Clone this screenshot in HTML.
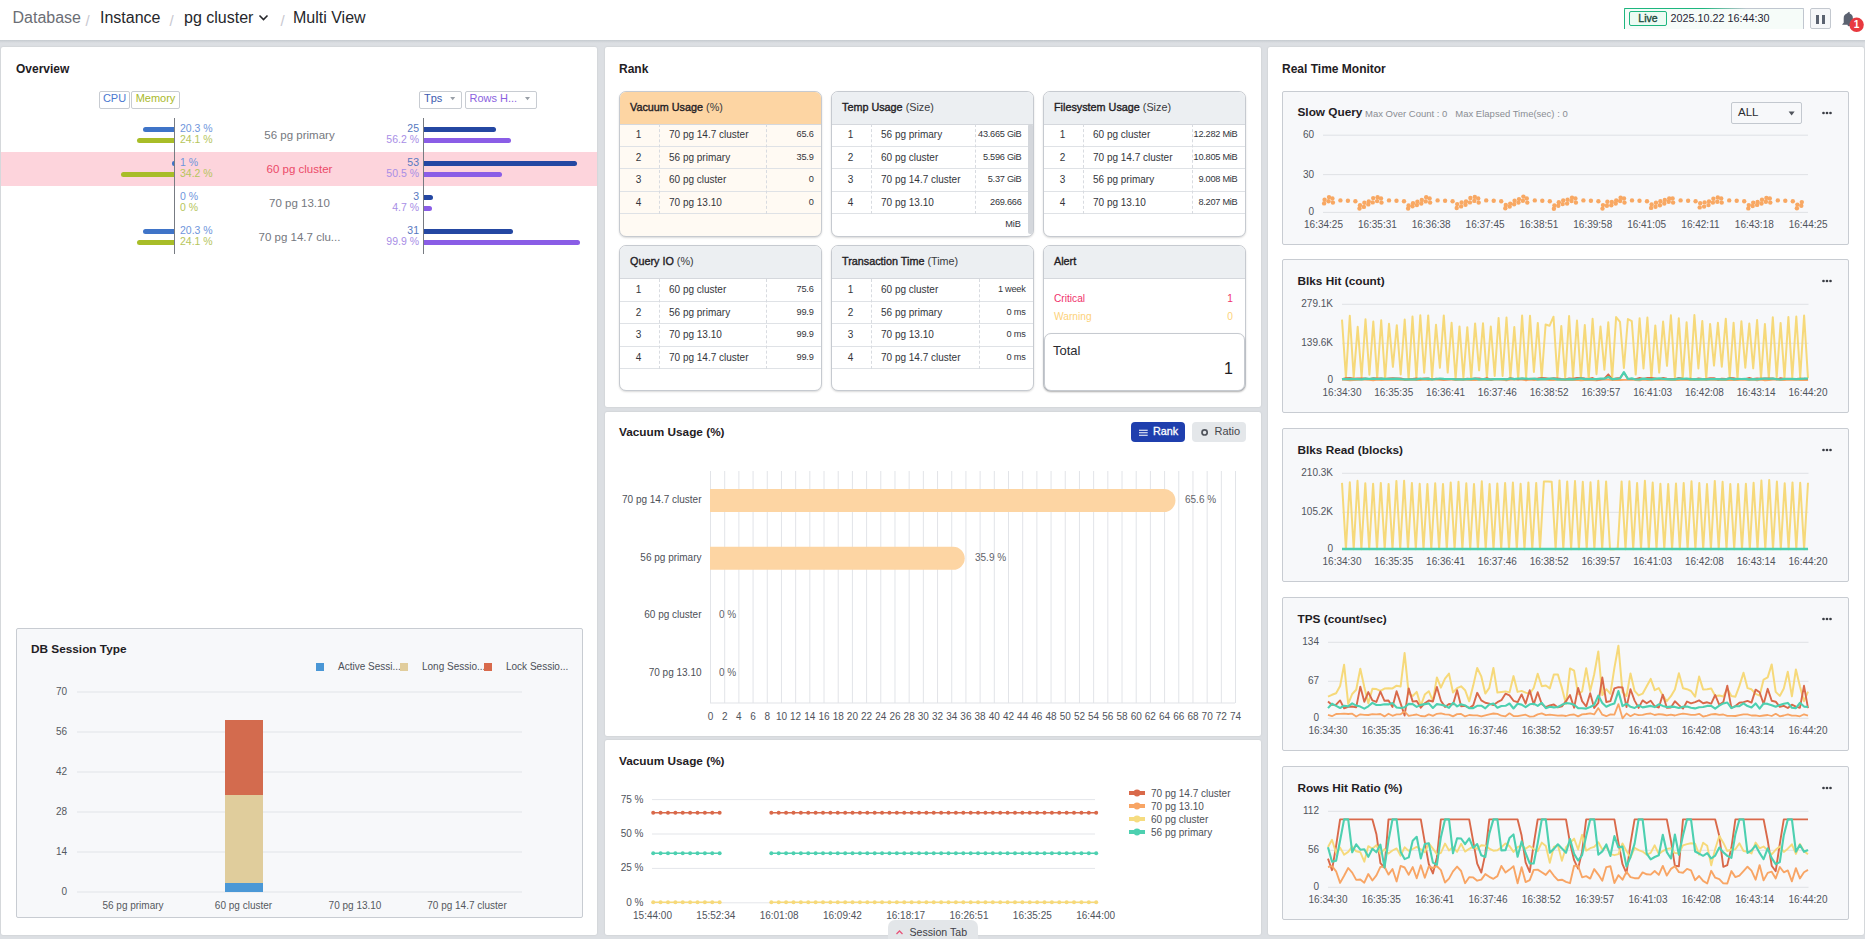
<!DOCTYPE html><html><head><meta charset="utf-8"><style>
*{margin:0;padding:0;box-sizing:border-box}
html,body{width:1865px;height:939px;overflow:hidden;background:#dcdfe3;font-family:"Liberation Sans",sans-serif}
.t{position:absolute;white-space:nowrap}
.b{position:absolute}
svg{position:absolute;left:0;top:0}
</style></head><body><div class="b" style="left:0px;top:0px;width:1865px;height:40px;background:#fff;"></div>
<div class="b" style="left:0px;top:40px;width:1865px;height:3px;background:linear-gradient(#c6cbd0,#dcdfe3);"></div>
<div class="t" style="left:12.5px;top:7.50px;font-size:16px;line-height:20px;color:#6b6e75;font-weight:normal;">Database</div>
<div class="t" style="left:85.5px;top:10.50px;font-size:15px;line-height:19px;color:#c8c8d0;font-weight:normal;">/</div>
<div class="t" style="left:100px;top:7.50px;font-size:16px;line-height:20px;color:#26272b;font-weight:normal;">Instance</div>
<div class="t" style="left:169.5px;top:10.50px;font-size:15px;line-height:19px;color:#c8c8d0;font-weight:normal;">/</div>
<div class="t" style="left:184px;top:7.50px;font-size:16px;line-height:20px;color:#26272b;font-weight:normal;">pg cluster</div>
<svg width="1865" height="40" style="left:0;top:0"><path d="M259.5 15.5 L263.5 19.5 L267.5 15.5" fill="none" stroke="#26272b" stroke-width="1.6"/></svg>
<div class="t" style="left:280.5px;top:10.50px;font-size:15px;line-height:19px;color:#c8c8d0;font-weight:normal;">/</div>
<div class="t" style="left:293px;top:7.50px;font-size:16px;line-height:20px;color:#26272b;font-weight:normal;">Multi View</div>
<div class="b" style="left:1624px;top:8px;width:180px;height:21px;background:#f6fcf9;border-left:1px solid #1db67f;border-right:1px solid #c0c6cf;border-radius:2px 2px 0 0;"></div>
<div class="b" style="left:1624px;top:8px;width:180px;height:1px;background:linear-gradient(90deg,#1db67f 0%,#1db67f 44%,#bfc6cf 68%,#bfc6cf 100%);border-radius:2px 2px 0 0;"></div>
<div class="b" style="left:1629px;top:11px;width:38px;height:15px;background:#ecfbf3;border:1px solid #1db67f;border-radius:2px;"></div>
<div class="t" style="left:1628.0px;width:40px;text-align:center;top:11.25px;font-size:10.5px;line-height:14.5px;color:#1b4a3d;font-weight:normal;-webkit-text-stroke:0.35px #1b4a3d;">Live</div>
<div class="t" style="left:1670.5px;top:10.60px;font-size:10.8px;line-height:14.8px;color:#262636;font-weight:normal;">2025.10.22 16:44:30</div>
<div class="b" style="left:1810px;top:8px;width:21px;height:21px;background:#f6f7f9;border:1px solid #c3c8cf;border-radius:2px;"></div>
<div class="b" style="left:1816px;top:15px;width:3px;height:9px;background:#5b6270;"></div>
<div class="b" style="left:1822px;top:15px;width:3px;height:9px;background:#5b6270;"></div>
<svg width="1865" height="40" style="left:0;top:0"><path d="M1848.3 12.2 a1 1 0 0 1 1.4 0 l0 1.2 c2.2 .6 3.2 2.4 3.2 4.8 v4.6 l1.4 1.4 v.6 h-12 v-.6 l1.4 -1.4 v-4.6 c0 -2.4 1 -4.2 3.2 -4.8z M1847.5 24.8 h3 a1.5 1.5 0 0 1 -3 0z" fill="#5b6270"/><circle cx="1856.6" cy="24.8" r="7.2" fill="#e8393f"/></svg>
<div class="t" style="left:1849.6px;width:14px;text-align:center;top:17.80px;font-size:10px;line-height:14px;color:#fff;font-weight:bold;">1</div>
<div class="b" style="left:1px;top:47px;width:596px;height:888px;background:#fff;border-radius:2px;box-shadow:0 0 2px rgba(0,0,0,.12);"></div>
<div class="b" style="left:605px;top:47px;width:656px;height:360px;background:#fff;border-radius:2px;box-shadow:0 0 2px rgba(0,0,0,.12);"></div>
<div class="b" style="left:605px;top:412px;width:656px;height:324px;background:#fff;border-radius:2px;box-shadow:0 0 2px rgba(0,0,0,.12);"></div>
<div class="b" style="left:605px;top:740px;width:656px;height:195px;background:#fff;border-radius:2px;box-shadow:0 0 2px rgba(0,0,0,.12);"></div>
<div class="b" style="left:1268px;top:47px;width:596px;height:888px;background:#fff;border-radius:2px;box-shadow:0 0 2px rgba(0,0,0,.12);"></div>
<div class="t" style="left:16px;top:60.50px;font-size:12px;line-height:16px;color:#1f2024;font-weight:bold;">Overview</div>
<div class="b" style="left:99px;top:91px;width:31px;height:18px;background:#fff;border:1px solid #c8ccd2;border-radius:2px;"></div>
<div class="t" style="left:99.5px;width:30px;text-align:center;top:91.00px;font-size:11px;line-height:15px;color:#4a78d0;font-weight:normal;">CPU</div>
<div class="b" style="left:131px;top:91px;width:49px;height:18px;background:#fff;border:1px solid #c8ccd2;border-radius:2px;"></div>
<div class="t" style="left:131.5px;width:48px;text-align:center;top:91.00px;font-size:11px;line-height:15px;color:#a9b92c;font-weight:normal;">Memory</div>
<div class="b" style="left:419px;top:91px;width:43px;height:18px;background:#fff;border:1px solid #c8ccd2;border-radius:2px;"></div>
<div class="t" style="left:424px;top:91.00px;font-size:11px;line-height:15px;color:#3d5bb0;font-weight:normal;">Tps</div>
<div class="b" style="left:465px;top:91px;width:72px;height:18px;background:#fff;border:1px solid #c8ccd2;border-radius:2px;"></div>
<svg width="1865" height="939"><path d="M450.2 97 h5 l-2.5 3.2z M525 97 h5 l-2.5 3.2z" fill="#9aa0a8"/></svg>
<div class="t" style="left:469.5px;top:91.00px;font-size:11px;line-height:15px;color:#8a62e0;font-weight:normal;">Rows H...</div>
<div class="b" style="left:142.535px;top:127px;width:31.465000000000003px;height:5px;background:#3f74c8;border-radius:3px 0 0 3px;"></div>
<div class="b" style="left:136.64499999999998px;top:137.5px;width:37.355000000000004px;height:5.5px;background:#a8bd28;border-radius:3px 0 0 3px;"></div>
<div class="t" style="left:180px;top:121.25px;font-size:10.5px;line-height:14.5px;color:#6f96dc;font-weight:normal;">20.3 %</div>
<div class="t" style="left:180px;top:131.95px;font-size:10.5px;line-height:14.5px;color:#b6c55c;font-weight:normal;">24.1 %</div>
<div class="t" style="left:229.5px;width:140px;text-align:center;top:127.95px;font-size:11.5px;line-height:15.5px;color:#75787e;font-weight:normal;">56 pg primary</div>
<div class="b" style="left:423px;top:127px;width:72.5px;height:5px;background:#2447a2;border-radius:0 3px 3px 0;"></div>
<div class="b" style="left:423px;top:137.5px;width:88.23400000000001px;height:5.5px;background:#8a5de6;border-radius:0 3px 3px 0;"></div>
<div class="t" style="left:359px;width:60px;text-align:right;top:121.25px;font-size:10.5px;line-height:14.5px;color:#5778c0;font-weight:normal;">25</div>
<div class="t" style="left:359px;width:60px;text-align:right;top:131.95px;font-size:10.5px;line-height:14.5px;color:#a88ee6;font-weight:normal;">56.2 %</div>
<div class="b" style="left:1px;top:152px;width:596px;height:34px;background:#fdd4dc;"></div>
<div class="b" style="left:172.45px;top:161px;width:1.55px;height:5px;background:#3f74c8;border-radius:3px 0 0 3px;"></div>
<div class="b" style="left:120.99px;top:171.5px;width:53.010000000000005px;height:5.5px;background:#a8bd28;border-radius:3px 0 0 3px;"></div>
<div class="t" style="left:180px;top:155.25px;font-size:10.5px;line-height:14.5px;color:#6f96dc;font-weight:normal;">1 %</div>
<div class="t" style="left:180px;top:165.95px;font-size:10.5px;line-height:14.5px;color:#b6c55c;font-weight:normal;">34.2 %</div>
<div class="t" style="left:229.5px;width:140px;text-align:center;top:161.95px;font-size:11.5px;line-height:15.5px;color:#ec4a69;font-weight:normal;">60 pg cluster</div>
<div class="b" style="left:423px;top:161px;width:153.7px;height:5px;background:#2447a2;border-radius:0 3px 3px 0;"></div>
<div class="b" style="left:423px;top:171.5px;width:79.285px;height:5.5px;background:#8a5de6;border-radius:0 3px 3px 0;"></div>
<div class="t" style="left:359px;width:60px;text-align:right;top:155.25px;font-size:10.5px;line-height:14.5px;color:#5778c0;font-weight:normal;">53</div>
<div class="t" style="left:359px;width:60px;text-align:right;top:165.95px;font-size:10.5px;line-height:14.5px;color:#a88ee6;font-weight:normal;">50.5 %</div>
<div class="t" style="left:180px;top:189.25px;font-size:10.5px;line-height:14.5px;color:#6f96dc;font-weight:normal;">0 %</div>
<div class="t" style="left:180px;top:199.95px;font-size:10.5px;line-height:14.5px;color:#b6c55c;font-weight:normal;">0 %</div>
<div class="t" style="left:229.5px;width:140px;text-align:center;top:195.95px;font-size:11.5px;line-height:15.5px;color:#75787e;font-weight:normal;">70 pg 13.10</div>
<div class="b" style="left:423px;top:195px;width:10px;height:5px;background:#2447a2;border-radius:0 3px 3px 0;"></div>
<div class="b" style="left:423px;top:205.5px;width:9px;height:5.5px;background:#8a5de6;border-radius:0 3px 3px 0;"></div>
<div class="t" style="left:359px;width:60px;text-align:right;top:189.25px;font-size:10.5px;line-height:14.5px;color:#5778c0;font-weight:normal;">3</div>
<div class="t" style="left:359px;width:60px;text-align:right;top:199.95px;font-size:10.5px;line-height:14.5px;color:#a88ee6;font-weight:normal;">4.7 %</div>
<div class="b" style="left:142.535px;top:229px;width:31.465000000000003px;height:5px;background:#3f74c8;border-radius:3px 0 0 3px;"></div>
<div class="b" style="left:136.64499999999998px;top:239.5px;width:37.355000000000004px;height:5.5px;background:#a8bd28;border-radius:3px 0 0 3px;"></div>
<div class="t" style="left:180px;top:223.25px;font-size:10.5px;line-height:14.5px;color:#6f96dc;font-weight:normal;">20.3 %</div>
<div class="t" style="left:180px;top:233.95px;font-size:10.5px;line-height:14.5px;color:#b6c55c;font-weight:normal;">24.1 %</div>
<div class="t" style="left:229.5px;width:140px;text-align:center;top:229.95px;font-size:11.5px;line-height:15.5px;color:#75787e;font-weight:normal;">70 pg 14.7 clu...</div>
<div class="b" style="left:423px;top:229px;width:89.89999999999999px;height:5px;background:#2447a2;border-radius:0 3px 3px 0;"></div>
<div class="b" style="left:423px;top:239.5px;width:156.84300000000002px;height:5.5px;background:#8a5de6;border-radius:0 3px 3px 0;"></div>
<div class="t" style="left:359px;width:60px;text-align:right;top:223.25px;font-size:10.5px;line-height:14.5px;color:#5778c0;font-weight:normal;">31</div>
<div class="t" style="left:359px;width:60px;text-align:right;top:233.95px;font-size:10.5px;line-height:14.5px;color:#a88ee6;font-weight:normal;">99.9 %</div>
<div class="b" style="left:174px;top:118px;width:1px;height:136px;background:#777b82;"></div>
<div class="b" style="left:423px;top:118px;width:1px;height:136px;background:#777b82;"></div>
<div class="b" style="left:16px;top:628px;width:567px;height:290px;background:#f7f8fa;border:1px solid #c8ccd2;border-radius:2px;"></div>
<div class="t" style="left:31px;top:641.60px;font-size:11.8px;line-height:15.8px;color:#1f2024;font-weight:bold;">DB Session Type</div>
<div class="b" style="left:316px;top:663px;width:8px;height:8px;background:#4a97d6;"></div>
<div class="t" style="left:338px;top:660.00px;font-size:10px;line-height:14px;color:#4d5058;font-weight:normal;">Active Sessi...</div>
<div class="b" style="left:400px;top:663px;width:8px;height:8px;background:#e1cd9c;"></div>
<div class="t" style="left:422px;top:660.00px;font-size:10px;line-height:14px;color:#4d5058;font-weight:normal;">Long Sessio...</div>
<div class="b" style="left:484px;top:663px;width:8px;height:8px;background:#d86a4c;"></div>
<div class="t" style="left:506px;top:660.00px;font-size:10px;line-height:14px;color:#4d5058;font-weight:normal;">Lock Sessio...</div>
<svg width="1865" height="939"><rect x="77" y="691.5" width="445" height="1" fill="#e1e3e7"/><rect x="77" y="731.5" width="445" height="1" fill="#e1e3e7"/><rect x="77" y="771.5" width="445" height="1" fill="#e1e3e7"/><rect x="77" y="811.5" width="445" height="1" fill="#e1e3e7"/><rect x="77" y="851.5" width="445" height="1" fill="#e1e3e7"/><rect x="77" y="891.5" width="445" height="1" fill="#e1e3e7"/><rect x="225" y="720" width="38" height="75" fill="#d36b4e"/><rect x="225" y="795" width="38" height="88" fill="#e0cd9c"/><rect x="225" y="883" width="38" height="9" fill="#4b98d6"/></svg>
<div class="t" style="left:27px;width:40px;text-align:right;top:685.00px;font-size:10px;line-height:14px;color:#55585e;font-weight:normal;">70</div>
<div class="t" style="left:27px;width:40px;text-align:right;top:725.00px;font-size:10px;line-height:14px;color:#55585e;font-weight:normal;">56</div>
<div class="t" style="left:27px;width:40px;text-align:right;top:765.00px;font-size:10px;line-height:14px;color:#55585e;font-weight:normal;">42</div>
<div class="t" style="left:27px;width:40px;text-align:right;top:805.00px;font-size:10px;line-height:14px;color:#55585e;font-weight:normal;">28</div>
<div class="t" style="left:27px;width:40px;text-align:right;top:845.00px;font-size:10px;line-height:14px;color:#55585e;font-weight:normal;">14</div>
<div class="t" style="left:27px;width:40px;text-align:right;top:885.00px;font-size:10px;line-height:14px;color:#55585e;font-weight:normal;">0</div>
<div class="t" style="left:73.0px;width:120px;text-align:center;top:898.50px;font-size:10px;line-height:14px;color:#55585e;font-weight:normal;">56 pg primary</div>
<div class="t" style="left:183.5px;width:120px;text-align:center;top:898.50px;font-size:10px;line-height:14px;color:#55585e;font-weight:normal;">60 pg cluster</div>
<div class="t" style="left:295.0px;width:120px;text-align:center;top:898.50px;font-size:10px;line-height:14px;color:#55585e;font-weight:normal;">70 pg 13.10</div>
<div class="t" style="left:407.0px;width:120px;text-align:center;top:898.50px;font-size:10px;line-height:14px;color:#55585e;font-weight:normal;">70 pg 14.7 cluster</div>
<div class="t" style="left:619px;top:60.50px;font-size:12px;line-height:16px;color:#1f2024;font-weight:bold;">Rank</div>
<div class="b" style="left:619px;top:91px;width:203px;height:146px;background:#fffaf3;border:1px solid #c6cad0;border-radius:7px;box-shadow:0 1px 2px rgba(0,0,0,.15);overflow:hidden;"></div>
<div class="b" style="left:620px;top:92px;width:201px;height:33px;background:#fdd5a3;border-radius:6px 6px 0 0;border-bottom:1px solid #d5d8dd;"></div>
<div class="t" style="left:630px;top:100.40px;font-size:10.8px;line-height:14.8px;color:#1f2024;font-weight:normal;"><span style="-webkit-text-stroke:0.35px #1f2024">Vacuum Usage</span> <span style="color:#3a3b40">(%)</span></div>
<div class="b" style="left:620px;top:145.5px;width:201px;height:1px;background:#dfe2e6;"></div>
<div class="t" style="left:623.5px;width:30px;text-align:center;top:128.00px;font-size:10px;line-height:14px;color:#33353b;font-weight:normal;">1</div>
<div class="t" style="left:669px;top:128.00px;font-size:10px;line-height:14px;color:#33353b;font-weight:normal;">70 pg 14.7 cluster</div>
<div class="t" style="left:733.5px;width:80px;text-align:right;top:128.40px;font-size:9.2px;line-height:13.2px;color:#33353b;font-weight:normal;letter-spacing:-0.25px;">65.6</div>
<div class="b" style="left:620px;top:168.0px;width:201px;height:1px;background:#dfe2e6;"></div>
<div class="t" style="left:623.5px;width:30px;text-align:center;top:150.50px;font-size:10px;line-height:14px;color:#33353b;font-weight:normal;">2</div>
<div class="t" style="left:669px;top:150.50px;font-size:10px;line-height:14px;color:#33353b;font-weight:normal;">56 pg primary</div>
<div class="t" style="left:733.5px;width:80px;text-align:right;top:150.90px;font-size:9.2px;line-height:13.2px;color:#33353b;font-weight:normal;letter-spacing:-0.25px;">35.9</div>
<div class="b" style="left:620px;top:190.5px;width:201px;height:1px;background:#dfe2e6;"></div>
<div class="t" style="left:623.5px;width:30px;text-align:center;top:173.00px;font-size:10px;line-height:14px;color:#33353b;font-weight:normal;">3</div>
<div class="t" style="left:669px;top:173.00px;font-size:10px;line-height:14px;color:#33353b;font-weight:normal;">60 pg cluster</div>
<div class="t" style="left:733.5px;width:80px;text-align:right;top:173.40px;font-size:9.2px;line-height:13.2px;color:#33353b;font-weight:normal;letter-spacing:-0.25px;">0</div>
<div class="b" style="left:620px;top:213.0px;width:201px;height:1px;background:#dfe2e6;"></div>
<div class="t" style="left:623.5px;width:30px;text-align:center;top:195.50px;font-size:10px;line-height:14px;color:#33353b;font-weight:normal;">4</div>
<div class="t" style="left:669px;top:195.50px;font-size:10px;line-height:14px;color:#33353b;font-weight:normal;">70 pg 13.10</div>
<div class="t" style="left:733.5px;width:80px;text-align:right;top:195.90px;font-size:9.2px;line-height:13.2px;color:#33353b;font-weight:normal;letter-spacing:-0.25px;">0</div>
<div class="b" style="left:658.5px;top:123.5px;width:0px;height:90px;border-left:1px dashed #d8dbe0;"></div>
<div class="b" style="left:766px;top:123.5px;width:0px;height:90px;border-left:1px dashed #d8dbe0;"></div>
<div class="b" style="left:831px;top:91px;width:203px;height:146px;background:#fff;border:1px solid #c6cad0;border-radius:7px;box-shadow:0 1px 2px rgba(0,0,0,.15);overflow:hidden;"></div>
<div class="b" style="left:832px;top:92px;width:201px;height:33px;background:#eceff2;border-radius:6px 6px 0 0;border-bottom:1px solid #d5d8dd;"></div>
<div class="t" style="left:842px;top:100.40px;font-size:10.8px;line-height:14.8px;color:#1f2024;font-weight:normal;"><span style="-webkit-text-stroke:0.35px #1f2024">Temp Usage</span> <span style="color:#3a3b40">(Size)</span></div>
<div class="b" style="left:832px;top:145.5px;width:196px;height:1px;background:#dfe2e6;"></div>
<div class="t" style="left:835.5px;width:30px;text-align:center;top:128.00px;font-size:10px;line-height:14px;color:#33353b;font-weight:normal;">1</div>
<div class="t" style="left:881px;top:128.00px;font-size:10px;line-height:14px;color:#33353b;font-weight:normal;">56 pg primary</div>
<div class="t" style="left:941.5px;width:80px;text-align:right;top:128.40px;font-size:9.2px;line-height:13.2px;color:#33353b;font-weight:normal;letter-spacing:-0.25px;">43.665 GiB</div>
<div class="b" style="left:832px;top:168.0px;width:196px;height:1px;background:#dfe2e6;"></div>
<div class="t" style="left:835.5px;width:30px;text-align:center;top:150.50px;font-size:10px;line-height:14px;color:#33353b;font-weight:normal;">2</div>
<div class="t" style="left:881px;top:150.50px;font-size:10px;line-height:14px;color:#33353b;font-weight:normal;">60 pg cluster</div>
<div class="t" style="left:941.5px;width:80px;text-align:right;top:150.90px;font-size:9.2px;line-height:13.2px;color:#33353b;font-weight:normal;letter-spacing:-0.25px;">5.596 GiB</div>
<div class="b" style="left:832px;top:190.5px;width:196px;height:1px;background:#dfe2e6;"></div>
<div class="t" style="left:835.5px;width:30px;text-align:center;top:173.00px;font-size:10px;line-height:14px;color:#33353b;font-weight:normal;">3</div>
<div class="t" style="left:881px;top:173.00px;font-size:10px;line-height:14px;color:#33353b;font-weight:normal;">70 pg 14.7 cluster</div>
<div class="t" style="left:941.5px;width:80px;text-align:right;top:173.40px;font-size:9.2px;line-height:13.2px;color:#33353b;font-weight:normal;letter-spacing:-0.25px;">5.37 GiB</div>
<div class="b" style="left:832px;top:213.0px;width:196px;height:1px;background:#dfe2e6;"></div>
<div class="t" style="left:835.5px;width:30px;text-align:center;top:195.50px;font-size:10px;line-height:14px;color:#33353b;font-weight:normal;">4</div>
<div class="t" style="left:881px;top:195.50px;font-size:10px;line-height:14px;color:#33353b;font-weight:normal;">70 pg 13.10</div>
<div class="t" style="left:941.5px;width:80px;text-align:right;top:195.90px;font-size:9.2px;line-height:13.2px;color:#33353b;font-weight:normal;letter-spacing:-0.25px;">269.666</div>
<div class="b" style="left:870.5px;top:123.5px;width:0px;height:90px;border-left:1px dashed #d8dbe0;"></div>
<div class="b" style="left:974.5px;top:123.5px;width:0px;height:90px;border-left:1px dashed #d8dbe0;"></div>
<div class="b" style="left:1028px;top:124px;width:5px;height:110px;background:#d4d7dc;border-radius:2px;"></div>
<div class="t" style="left:941px;width:80px;text-align:right;top:218.40px;font-size:9.2px;line-height:13.2px;color:#33353b;font-weight:normal;">MiB</div>
<div class="b" style="left:1043px;top:91px;width:203px;height:146px;background:#fff;border:1px solid #c6cad0;border-radius:7px;box-shadow:0 1px 2px rgba(0,0,0,.15);overflow:hidden;"></div>
<div class="b" style="left:1044px;top:92px;width:201px;height:33px;background:#eceff2;border-radius:6px 6px 0 0;border-bottom:1px solid #d5d8dd;"></div>
<div class="t" style="left:1054px;top:100.40px;font-size:10.8px;line-height:14.8px;color:#1f2024;font-weight:normal;"><span style="-webkit-text-stroke:0.35px #1f2024">Filesystem Usage</span> <span style="color:#3a3b40">(Size)</span></div>
<div class="b" style="left:1044px;top:145.5px;width:201px;height:1px;background:#dfe2e6;"></div>
<div class="t" style="left:1047.5px;width:30px;text-align:center;top:128.00px;font-size:10px;line-height:14px;color:#33353b;font-weight:normal;">1</div>
<div class="t" style="left:1093px;top:128.00px;font-size:10px;line-height:14px;color:#33353b;font-weight:normal;">60 pg cluster</div>
<div class="t" style="left:1157.5px;width:80px;text-align:right;top:128.40px;font-size:9.2px;line-height:13.2px;color:#33353b;font-weight:normal;letter-spacing:-0.25px;">12.282 MiB</div>
<div class="b" style="left:1044px;top:168.0px;width:201px;height:1px;background:#dfe2e6;"></div>
<div class="t" style="left:1047.5px;width:30px;text-align:center;top:150.50px;font-size:10px;line-height:14px;color:#33353b;font-weight:normal;">2</div>
<div class="t" style="left:1093px;top:150.50px;font-size:10px;line-height:14px;color:#33353b;font-weight:normal;">70 pg 14.7 cluster</div>
<div class="t" style="left:1157.5px;width:80px;text-align:right;top:150.90px;font-size:9.2px;line-height:13.2px;color:#33353b;font-weight:normal;letter-spacing:-0.25px;">10.805 MiB</div>
<div class="b" style="left:1044px;top:190.5px;width:201px;height:1px;background:#dfe2e6;"></div>
<div class="t" style="left:1047.5px;width:30px;text-align:center;top:173.00px;font-size:10px;line-height:14px;color:#33353b;font-weight:normal;">3</div>
<div class="t" style="left:1093px;top:173.00px;font-size:10px;line-height:14px;color:#33353b;font-weight:normal;">56 pg primary</div>
<div class="t" style="left:1157.5px;width:80px;text-align:right;top:173.40px;font-size:9.2px;line-height:13.2px;color:#33353b;font-weight:normal;letter-spacing:-0.25px;">9.008 MiB</div>
<div class="b" style="left:1044px;top:213.0px;width:201px;height:1px;background:#dfe2e6;"></div>
<div class="t" style="left:1047.5px;width:30px;text-align:center;top:195.50px;font-size:10px;line-height:14px;color:#33353b;font-weight:normal;">4</div>
<div class="t" style="left:1093px;top:195.50px;font-size:10px;line-height:14px;color:#33353b;font-weight:normal;">70 pg 13.10</div>
<div class="t" style="left:1157.5px;width:80px;text-align:right;top:195.90px;font-size:9.2px;line-height:13.2px;color:#33353b;font-weight:normal;letter-spacing:-0.25px;">8.207 MiB</div>
<div class="b" style="left:1082.5px;top:123.5px;width:0px;height:90px;border-left:1px dashed #d8dbe0;"></div>
<div class="b" style="left:1191.5px;top:123.5px;width:0px;height:90px;border-left:1px dashed #d8dbe0;"></div>
<div class="b" style="left:619px;top:245px;width:203px;height:146px;background:#fff;border:1px solid #c6cad0;border-radius:7px;box-shadow:0 1px 2px rgba(0,0,0,.15);overflow:hidden;"></div>
<div class="b" style="left:620px;top:246px;width:201px;height:33px;background:#eceff2;border-radius:6px 6px 0 0;border-bottom:1px solid #d5d8dd;"></div>
<div class="t" style="left:630px;top:254.40px;font-size:10.8px;line-height:14.8px;color:#1f2024;font-weight:normal;"><span style="-webkit-text-stroke:0.35px #1f2024">Query IO</span> <span style="color:#3a3b40">(%)</span></div>
<div class="b" style="left:620px;top:300.5px;width:201px;height:1px;background:#dfe2e6;"></div>
<div class="t" style="left:623.5px;width:30px;text-align:center;top:283.00px;font-size:10px;line-height:14px;color:#33353b;font-weight:normal;">1</div>
<div class="t" style="left:669px;top:283.00px;font-size:10px;line-height:14px;color:#33353b;font-weight:normal;">60 pg cluster</div>
<div class="t" style="left:733.5px;width:80px;text-align:right;top:283.40px;font-size:9.2px;line-height:13.2px;color:#33353b;font-weight:normal;letter-spacing:-0.25px;">75.6</div>
<div class="b" style="left:620px;top:323.0px;width:201px;height:1px;background:#dfe2e6;"></div>
<div class="t" style="left:623.5px;width:30px;text-align:center;top:305.50px;font-size:10px;line-height:14px;color:#33353b;font-weight:normal;">2</div>
<div class="t" style="left:669px;top:305.50px;font-size:10px;line-height:14px;color:#33353b;font-weight:normal;">56 pg primary</div>
<div class="t" style="left:733.5px;width:80px;text-align:right;top:305.90px;font-size:9.2px;line-height:13.2px;color:#33353b;font-weight:normal;letter-spacing:-0.25px;">99.9</div>
<div class="b" style="left:620px;top:345.5px;width:201px;height:1px;background:#dfe2e6;"></div>
<div class="t" style="left:623.5px;width:30px;text-align:center;top:328.00px;font-size:10px;line-height:14px;color:#33353b;font-weight:normal;">3</div>
<div class="t" style="left:669px;top:328.00px;font-size:10px;line-height:14px;color:#33353b;font-weight:normal;">70 pg 13.10</div>
<div class="t" style="left:733.5px;width:80px;text-align:right;top:328.40px;font-size:9.2px;line-height:13.2px;color:#33353b;font-weight:normal;letter-spacing:-0.25px;">99.9</div>
<div class="b" style="left:620px;top:368.0px;width:201px;height:1px;background:#dfe2e6;"></div>
<div class="t" style="left:623.5px;width:30px;text-align:center;top:350.50px;font-size:10px;line-height:14px;color:#33353b;font-weight:normal;">4</div>
<div class="t" style="left:669px;top:350.50px;font-size:10px;line-height:14px;color:#33353b;font-weight:normal;">70 pg 14.7 cluster</div>
<div class="t" style="left:733.5px;width:80px;text-align:right;top:350.90px;font-size:9.2px;line-height:13.2px;color:#33353b;font-weight:normal;letter-spacing:-0.25px;">99.9</div>
<div class="b" style="left:658.5px;top:278.5px;width:0px;height:90px;border-left:1px dashed #d8dbe0;"></div>
<div class="b" style="left:766px;top:278.5px;width:0px;height:90px;border-left:1px dashed #d8dbe0;"></div>
<div class="b" style="left:831px;top:245px;width:203px;height:146px;background:#fff;border:1px solid #c6cad0;border-radius:7px;box-shadow:0 1px 2px rgba(0,0,0,.15);overflow:hidden;"></div>
<div class="b" style="left:832px;top:246px;width:201px;height:33px;background:#eceff2;border-radius:6px 6px 0 0;border-bottom:1px solid #d5d8dd;"></div>
<div class="t" style="left:842px;top:254.40px;font-size:10.8px;line-height:14.8px;color:#1f2024;font-weight:normal;"><span style="-webkit-text-stroke:0.35px #1f2024">Transaction Time</span> <span style="color:#3a3b40">(Time)</span></div>
<div class="b" style="left:832px;top:300.5px;width:201px;height:1px;background:#dfe2e6;"></div>
<div class="t" style="left:835.5px;width:30px;text-align:center;top:283.00px;font-size:10px;line-height:14px;color:#33353b;font-weight:normal;">1</div>
<div class="t" style="left:881px;top:283.00px;font-size:10px;line-height:14px;color:#33353b;font-weight:normal;">60 pg cluster</div>
<div class="t" style="left:945.5px;width:80px;text-align:right;top:283.40px;font-size:9.2px;line-height:13.2px;color:#33353b;font-weight:normal;letter-spacing:-0.25px;">1 week</div>
<div class="b" style="left:832px;top:323.0px;width:201px;height:1px;background:#dfe2e6;"></div>
<div class="t" style="left:835.5px;width:30px;text-align:center;top:305.50px;font-size:10px;line-height:14px;color:#33353b;font-weight:normal;">2</div>
<div class="t" style="left:881px;top:305.50px;font-size:10px;line-height:14px;color:#33353b;font-weight:normal;">56 pg primary</div>
<div class="t" style="left:945.5px;width:80px;text-align:right;top:305.90px;font-size:9.2px;line-height:13.2px;color:#33353b;font-weight:normal;letter-spacing:-0.25px;">0 ms</div>
<div class="b" style="left:832px;top:345.5px;width:201px;height:1px;background:#dfe2e6;"></div>
<div class="t" style="left:835.5px;width:30px;text-align:center;top:328.00px;font-size:10px;line-height:14px;color:#33353b;font-weight:normal;">3</div>
<div class="t" style="left:881px;top:328.00px;font-size:10px;line-height:14px;color:#33353b;font-weight:normal;">70 pg 13.10</div>
<div class="t" style="left:945.5px;width:80px;text-align:right;top:328.40px;font-size:9.2px;line-height:13.2px;color:#33353b;font-weight:normal;letter-spacing:-0.25px;">0 ms</div>
<div class="b" style="left:832px;top:368.0px;width:201px;height:1px;background:#dfe2e6;"></div>
<div class="t" style="left:835.5px;width:30px;text-align:center;top:350.50px;font-size:10px;line-height:14px;color:#33353b;font-weight:normal;">4</div>
<div class="t" style="left:881px;top:350.50px;font-size:10px;line-height:14px;color:#33353b;font-weight:normal;">70 pg 14.7 cluster</div>
<div class="t" style="left:945.5px;width:80px;text-align:right;top:350.90px;font-size:9.2px;line-height:13.2px;color:#33353b;font-weight:normal;letter-spacing:-0.25px;">0 ms</div>
<div class="b" style="left:870.5px;top:278.5px;width:0px;height:90px;border-left:1px dashed #d8dbe0;"></div>
<div class="b" style="left:979px;top:278.5px;width:0px;height:90px;border-left:1px dashed #d8dbe0;"></div>
<div class="b" style="left:1043px;top:245px;width:203px;height:146px;background:#fff;border:1px solid #c6cad0;border-radius:7px;box-shadow:0 1px 2px rgba(0,0,0,.15);"></div>
<div class="b" style="left:1044px;top:246px;width:201px;height:33px;background:#eceff2;border-radius:6px 6px 0 0;border-bottom:1px solid #d5d8dd;"></div>
<div class="t" style="left:1054px;top:254.40px;font-size:10.8px;line-height:14.8px;color:#1f2024;font-weight:normal;-webkit-text-stroke:0.35px #1f2024;">Alert</div>
<div class="t" style="left:1054px;top:291.70px;font-size:10.2px;line-height:14.2px;color:#f0336c;font-weight:normal;">Critical</div>
<div class="t" style="left:1203px;width:30px;text-align:right;top:291.70px;font-size:10.2px;line-height:14.2px;color:#f0336c;font-weight:normal;">1</div>
<div class="t" style="left:1054px;top:309.50px;font-size:10.2px;line-height:14.2px;color:#fdd27a;font-weight:normal;">Warning</div>
<div class="t" style="left:1203px;width:30px;text-align:right;top:309.50px;font-size:10.2px;line-height:14.2px;color:#fdd27a;font-weight:normal;">0</div>
<div class="b" style="left:1044px;top:333px;width:201px;height:58px;background:#fff;border:1px solid #c6cad0;border-radius:7px;box-shadow:0 1px 2px rgba(0,0,0,.2);"></div>
<div class="t" style="left:1053px;top:341.80px;font-size:13px;line-height:17px;color:#2a2b30;font-weight:normal;">Total</div>
<div class="t" style="left:1203px;width:30px;text-align:right;top:358.50px;font-size:16px;line-height:20px;color:#1f2024;font-weight:normal;">1</div>
<div class="t" style="left:619px;top:424.60px;font-size:11.8px;line-height:15.8px;color:#1f2024;font-weight:bold;">Vacuum Usage (%)</div>
<div class="b" style="left:1131px;top:422px;width:54px;height:20px;background:#1f3fae;border-radius:4px;"></div>
<div class="b" style="left:1192px;top:422px;width:54px;height:20px;background:#e4e7ea;border-radius:4px;"></div>
<svg width="1865" height="939"><path d="M1139 430.2h8.7M1139 432.7h8.7M1139 435.2h8.7" stroke="#fff" stroke-width="1.1"/><circle cx="1204.6" cy="432.4" r="2.6" fill="none" stroke="#50545c" stroke-width="1.7"/></svg>
<div class="t" style="left:1153px;top:424.10px;font-size:10.8px;line-height:14.8px;color:#fff;font-weight:normal;-webkit-text-stroke:0.3px #fff;">Rank</div>
<div class="t" style="left:1214.5px;top:424.00px;font-size:11px;line-height:15px;color:#44464c;font-weight:normal;">Ratio</div>
<svg width="1865" height="939"><rect x="710.00" y="471" width="1" height="232" fill="#e2e4e8"/><rect x="724.19" y="471" width="1" height="232" fill="#e2e4e8"/><rect x="738.38" y="471" width="1" height="232" fill="#e2e4e8"/><rect x="752.57" y="471" width="1" height="232" fill="#e2e4e8"/><rect x="766.76" y="471" width="1" height="232" fill="#e2e4e8"/><rect x="780.95" y="471" width="1" height="232" fill="#e2e4e8"/><rect x="795.14" y="471" width="1" height="232" fill="#e2e4e8"/><rect x="809.33" y="471" width="1" height="232" fill="#e2e4e8"/><rect x="823.52" y="471" width="1" height="232" fill="#e2e4e8"/><rect x="837.71" y="471" width="1" height="232" fill="#e2e4e8"/><rect x="851.90" y="471" width="1" height="232" fill="#e2e4e8"/><rect x="866.09" y="471" width="1" height="232" fill="#e2e4e8"/><rect x="880.28" y="471" width="1" height="232" fill="#e2e4e8"/><rect x="894.47" y="471" width="1" height="232" fill="#e2e4e8"/><rect x="908.66" y="471" width="1" height="232" fill="#e2e4e8"/><rect x="922.85" y="471" width="1" height="232" fill="#e2e4e8"/><rect x="937.04" y="471" width="1" height="232" fill="#e2e4e8"/><rect x="951.23" y="471" width="1" height="232" fill="#e2e4e8"/><rect x="965.42" y="471" width="1" height="232" fill="#e2e4e8"/><rect x="979.61" y="471" width="1" height="232" fill="#e2e4e8"/><rect x="993.80" y="471" width="1" height="232" fill="#e2e4e8"/><rect x="1007.99" y="471" width="1" height="232" fill="#e2e4e8"/><rect x="1022.18" y="471" width="1" height="232" fill="#e2e4e8"/><rect x="1036.37" y="471" width="1" height="232" fill="#e2e4e8"/><rect x="1050.56" y="471" width="1" height="232" fill="#e2e4e8"/><rect x="1064.75" y="471" width="1" height="232" fill="#e2e4e8"/><rect x="1078.94" y="471" width="1" height="232" fill="#e2e4e8"/><rect x="1093.13" y="471" width="1" height="232" fill="#e2e4e8"/><rect x="1107.32" y="471" width="1" height="232" fill="#e2e4e8"/><rect x="1121.51" y="471" width="1" height="232" fill="#e2e4e8"/><rect x="1135.70" y="471" width="1" height="232" fill="#e2e4e8"/><rect x="1149.89" y="471" width="1" height="232" fill="#e2e4e8"/><rect x="1164.08" y="471" width="1" height="232" fill="#e2e4e8"/><rect x="1178.27" y="471" width="1" height="232" fill="#e2e4e8"/><rect x="1192.46" y="471" width="1" height="232" fill="#e2e4e8"/><rect x="1206.65" y="471" width="1" height="232" fill="#e2e4e8"/><rect x="1220.84" y="471" width="1" height="232" fill="#e2e4e8"/><rect x="1235.03" y="471" width="1" height="232" fill="#e2e4e8"/><rect x="710" y="702.5" width="525" height="1" fill="#e2e4e8"/><path d="M710 489.0 h453.93 a11.5 11.5 0 0 1 0 23 h-453.93z" fill="#fdd5a3"/><path d="M710 546.8 h243.21 a11.5 11.5 0 0 1 0 23 h-243.21z" fill="#fdd5a3"/></svg>
<div class="t" style="left:581.5px;width:120px;text-align:right;top:492.50px;font-size:10px;line-height:14px;color:#4d5058;font-weight:normal;">70 pg 14.7 cluster</div>
<div class="t" style="left:581.5px;width:120px;text-align:right;top:550.50px;font-size:10px;line-height:14px;color:#4d5058;font-weight:normal;">56 pg primary</div>
<div class="t" style="left:581.5px;width:120px;text-align:right;top:608.00px;font-size:10px;line-height:14px;color:#4d5058;font-weight:normal;">60 pg cluster</div>
<div class="t" style="left:581.5px;width:120px;text-align:right;top:666.00px;font-size:10px;line-height:14px;color:#4d5058;font-weight:normal;">70 pg 13.10</div>
<div class="t" style="left:1185px;top:492.50px;font-size:10px;line-height:14px;color:#5f636a;font-weight:normal;">65.6 %</div>
<div class="t" style="left:975px;top:550.50px;font-size:10px;line-height:14px;color:#5f636a;font-weight:normal;">35.9 %</div>
<div class="t" style="left:719px;top:608.00px;font-size:10px;line-height:14px;color:#5f636a;font-weight:normal;">0 %</div>
<div class="t" style="left:719px;top:666.00px;font-size:10px;line-height:14px;color:#5f636a;font-weight:normal;">0 %</div>
<div class="t" style="left:700.5px;width:20px;text-align:center;top:709.50px;font-size:10px;line-height:14px;color:#50545c;font-weight:normal;">0</div>
<div class="t" style="left:714.69px;width:20px;text-align:center;top:709.50px;font-size:10px;line-height:14px;color:#50545c;font-weight:normal;">2</div>
<div class="t" style="left:728.88px;width:20px;text-align:center;top:709.50px;font-size:10px;line-height:14px;color:#50545c;font-weight:normal;">4</div>
<div class="t" style="left:743.07px;width:20px;text-align:center;top:709.50px;font-size:10px;line-height:14px;color:#50545c;font-weight:normal;">6</div>
<div class="t" style="left:757.26px;width:20px;text-align:center;top:709.50px;font-size:10px;line-height:14px;color:#50545c;font-weight:normal;">8</div>
<div class="t" style="left:771.45px;width:20px;text-align:center;top:709.50px;font-size:10px;line-height:14px;color:#50545c;font-weight:normal;">10</div>
<div class="t" style="left:785.64px;width:20px;text-align:center;top:709.50px;font-size:10px;line-height:14px;color:#50545c;font-weight:normal;">12</div>
<div class="t" style="left:799.83px;width:20px;text-align:center;top:709.50px;font-size:10px;line-height:14px;color:#50545c;font-weight:normal;">14</div>
<div class="t" style="left:814.02px;width:20px;text-align:center;top:709.50px;font-size:10px;line-height:14px;color:#50545c;font-weight:normal;">16</div>
<div class="t" style="left:828.21px;width:20px;text-align:center;top:709.50px;font-size:10px;line-height:14px;color:#50545c;font-weight:normal;">18</div>
<div class="t" style="left:842.4px;width:20px;text-align:center;top:709.50px;font-size:10px;line-height:14px;color:#50545c;font-weight:normal;">20</div>
<div class="t" style="left:856.59px;width:20px;text-align:center;top:709.50px;font-size:10px;line-height:14px;color:#50545c;font-weight:normal;">22</div>
<div class="t" style="left:870.78px;width:20px;text-align:center;top:709.50px;font-size:10px;line-height:14px;color:#50545c;font-weight:normal;">24</div>
<div class="t" style="left:884.97px;width:20px;text-align:center;top:709.50px;font-size:10px;line-height:14px;color:#50545c;font-weight:normal;">26</div>
<div class="t" style="left:899.16px;width:20px;text-align:center;top:709.50px;font-size:10px;line-height:14px;color:#50545c;font-weight:normal;">28</div>
<div class="t" style="left:913.35px;width:20px;text-align:center;top:709.50px;font-size:10px;line-height:14px;color:#50545c;font-weight:normal;">30</div>
<div class="t" style="left:927.54px;width:20px;text-align:center;top:709.50px;font-size:10px;line-height:14px;color:#50545c;font-weight:normal;">32</div>
<div class="t" style="left:941.73px;width:20px;text-align:center;top:709.50px;font-size:10px;line-height:14px;color:#50545c;font-weight:normal;">34</div>
<div class="t" style="left:955.92px;width:20px;text-align:center;top:709.50px;font-size:10px;line-height:14px;color:#50545c;font-weight:normal;">36</div>
<div class="t" style="left:970.11px;width:20px;text-align:center;top:709.50px;font-size:10px;line-height:14px;color:#50545c;font-weight:normal;">38</div>
<div class="t" style="left:984.3px;width:20px;text-align:center;top:709.50px;font-size:10px;line-height:14px;color:#50545c;font-weight:normal;">40</div>
<div class="t" style="left:998.49px;width:20px;text-align:center;top:709.50px;font-size:10px;line-height:14px;color:#50545c;font-weight:normal;">42</div>
<div class="t" style="left:1012.6800000000001px;width:20px;text-align:center;top:709.50px;font-size:10px;line-height:14px;color:#50545c;font-weight:normal;">44</div>
<div class="t" style="left:1026.87px;width:20px;text-align:center;top:709.50px;font-size:10px;line-height:14px;color:#50545c;font-weight:normal;">46</div>
<div class="t" style="left:1041.06px;width:20px;text-align:center;top:709.50px;font-size:10px;line-height:14px;color:#50545c;font-weight:normal;">48</div>
<div class="t" style="left:1055.25px;width:20px;text-align:center;top:709.50px;font-size:10px;line-height:14px;color:#50545c;font-weight:normal;">50</div>
<div class="t" style="left:1069.44px;width:20px;text-align:center;top:709.50px;font-size:10px;line-height:14px;color:#50545c;font-weight:normal;">52</div>
<div class="t" style="left:1083.63px;width:20px;text-align:center;top:709.50px;font-size:10px;line-height:14px;color:#50545c;font-weight:normal;">54</div>
<div class="t" style="left:1097.82px;width:20px;text-align:center;top:709.50px;font-size:10px;line-height:14px;color:#50545c;font-weight:normal;">56</div>
<div class="t" style="left:1112.01px;width:20px;text-align:center;top:709.50px;font-size:10px;line-height:14px;color:#50545c;font-weight:normal;">58</div>
<div class="t" style="left:1126.2px;width:20px;text-align:center;top:709.50px;font-size:10px;line-height:14px;color:#50545c;font-weight:normal;">60</div>
<div class="t" style="left:1140.3899999999999px;width:20px;text-align:center;top:709.50px;font-size:10px;line-height:14px;color:#50545c;font-weight:normal;">62</div>
<div class="t" style="left:1154.58px;width:20px;text-align:center;top:709.50px;font-size:10px;line-height:14px;color:#50545c;font-weight:normal;">64</div>
<div class="t" style="left:1168.77px;width:20px;text-align:center;top:709.50px;font-size:10px;line-height:14px;color:#50545c;font-weight:normal;">66</div>
<div class="t" style="left:1182.96px;width:20px;text-align:center;top:709.50px;font-size:10px;line-height:14px;color:#50545c;font-weight:normal;">68</div>
<div class="t" style="left:1197.15px;width:20px;text-align:center;top:709.50px;font-size:10px;line-height:14px;color:#50545c;font-weight:normal;">70</div>
<div class="t" style="left:1211.34px;width:20px;text-align:center;top:709.50px;font-size:10px;line-height:14px;color:#50545c;font-weight:normal;">72</div>
<div class="t" style="left:1225.53px;width:20px;text-align:center;top:709.50px;font-size:10px;line-height:14px;color:#50545c;font-weight:normal;">74</div>
<div class="t" style="left:619px;top:753.60px;font-size:11.8px;line-height:15.8px;color:#1f2024;font-weight:bold;">Vacuum Usage (%)</div>
<svg width="1865" height="939"><rect x="652" y="799.10" width="443" height="1" fill="#e4e6ea"/><rect x="652" y="833.50" width="443" height="1" fill="#e4e6ea"/><rect x="652" y="867.90" width="443" height="1" fill="#e4e6ea"/><rect x="652" y="902.30" width="443" height="1" fill="#e4e6ea"/><path d="M653.20 812.7H719.65" stroke="#d9694a" stroke-width="1.6"/><circle cx="653.20" cy="812.7" r="2" fill="#d9694a"/><circle cx="660.58" cy="812.7" r="2" fill="#d9694a"/><circle cx="667.97" cy="812.7" r="2" fill="#d9694a"/><circle cx="675.35" cy="812.7" r="2" fill="#d9694a"/><circle cx="682.73" cy="812.7" r="2" fill="#d9694a"/><circle cx="690.12" cy="812.7" r="2" fill="#d9694a"/><circle cx="697.50" cy="812.7" r="2" fill="#d9694a"/><circle cx="704.88" cy="812.7" r="2" fill="#d9694a"/><circle cx="712.26" cy="812.7" r="2" fill="#d9694a"/><circle cx="719.65" cy="812.7" r="2" fill="#d9694a"/><path d="M771.33 812.7H1096.18" stroke="#d9694a" stroke-width="1.6"/><circle cx="771.33" cy="812.7" r="2" fill="#d9694a"/><circle cx="778.71" cy="812.7" r="2" fill="#d9694a"/><circle cx="786.09" cy="812.7" r="2" fill="#d9694a"/><circle cx="793.48" cy="812.7" r="2" fill="#d9694a"/><circle cx="800.86" cy="812.7" r="2" fill="#d9694a"/><circle cx="808.24" cy="812.7" r="2" fill="#d9694a"/><circle cx="815.63" cy="812.7" r="2" fill="#d9694a"/><circle cx="823.01" cy="812.7" r="2" fill="#d9694a"/><circle cx="830.39" cy="812.7" r="2" fill="#d9694a"/><circle cx="837.78" cy="812.7" r="2" fill="#d9694a"/><circle cx="845.16" cy="812.7" r="2" fill="#d9694a"/><circle cx="852.54" cy="812.7" r="2" fill="#d9694a"/><circle cx="859.92" cy="812.7" r="2" fill="#d9694a"/><circle cx="867.31" cy="812.7" r="2" fill="#d9694a"/><circle cx="874.69" cy="812.7" r="2" fill="#d9694a"/><circle cx="882.07" cy="812.7" r="2" fill="#d9694a"/><circle cx="889.46" cy="812.7" r="2" fill="#d9694a"/><circle cx="896.84" cy="812.7" r="2" fill="#d9694a"/><circle cx="904.22" cy="812.7" r="2" fill="#d9694a"/><circle cx="911.61" cy="812.7" r="2" fill="#d9694a"/><circle cx="918.99" cy="812.7" r="2" fill="#d9694a"/><circle cx="926.37" cy="812.7" r="2" fill="#d9694a"/><circle cx="933.75" cy="812.7" r="2" fill="#d9694a"/><circle cx="941.14" cy="812.7" r="2" fill="#d9694a"/><circle cx="948.52" cy="812.7" r="2" fill="#d9694a"/><circle cx="955.90" cy="812.7" r="2" fill="#d9694a"/><circle cx="963.29" cy="812.7" r="2" fill="#d9694a"/><circle cx="970.67" cy="812.7" r="2" fill="#d9694a"/><circle cx="978.05" cy="812.7" r="2" fill="#d9694a"/><circle cx="985.44" cy="812.7" r="2" fill="#d9694a"/><circle cx="992.82" cy="812.7" r="2" fill="#d9694a"/><circle cx="1000.20" cy="812.7" r="2" fill="#d9694a"/><circle cx="1007.58" cy="812.7" r="2" fill="#d9694a"/><circle cx="1014.97" cy="812.7" r="2" fill="#d9694a"/><circle cx="1022.35" cy="812.7" r="2" fill="#d9694a"/><circle cx="1029.73" cy="812.7" r="2" fill="#d9694a"/><circle cx="1037.12" cy="812.7" r="2" fill="#d9694a"/><circle cx="1044.50" cy="812.7" r="2" fill="#d9694a"/><circle cx="1051.88" cy="812.7" r="2" fill="#d9694a"/><circle cx="1059.27" cy="812.7" r="2" fill="#d9694a"/><circle cx="1066.65" cy="812.7" r="2" fill="#d9694a"/><circle cx="1074.03" cy="812.7" r="2" fill="#d9694a"/><circle cx="1081.41" cy="812.7" r="2" fill="#d9694a"/><circle cx="1088.80" cy="812.7" r="2" fill="#d9694a"/><circle cx="1096.18" cy="812.7" r="2" fill="#d9694a"/><path d="M653.20 853.2H719.65" stroke="#4dd0b0" stroke-width="1.6"/><circle cx="653.20" cy="853.2" r="2" fill="#4dd0b0"/><circle cx="660.58" cy="853.2" r="2" fill="#4dd0b0"/><circle cx="667.97" cy="853.2" r="2" fill="#4dd0b0"/><circle cx="675.35" cy="853.2" r="2" fill="#4dd0b0"/><circle cx="682.73" cy="853.2" r="2" fill="#4dd0b0"/><circle cx="690.12" cy="853.2" r="2" fill="#4dd0b0"/><circle cx="697.50" cy="853.2" r="2" fill="#4dd0b0"/><circle cx="704.88" cy="853.2" r="2" fill="#4dd0b0"/><circle cx="712.26" cy="853.2" r="2" fill="#4dd0b0"/><circle cx="719.65" cy="853.2" r="2" fill="#4dd0b0"/><path d="M771.33 853.2H1096.18" stroke="#4dd0b0" stroke-width="1.6"/><circle cx="771.33" cy="853.2" r="2" fill="#4dd0b0"/><circle cx="778.71" cy="853.2" r="2" fill="#4dd0b0"/><circle cx="786.09" cy="853.2" r="2" fill="#4dd0b0"/><circle cx="793.48" cy="853.2" r="2" fill="#4dd0b0"/><circle cx="800.86" cy="853.2" r="2" fill="#4dd0b0"/><circle cx="808.24" cy="853.2" r="2" fill="#4dd0b0"/><circle cx="815.63" cy="853.2" r="2" fill="#4dd0b0"/><circle cx="823.01" cy="853.2" r="2" fill="#4dd0b0"/><circle cx="830.39" cy="853.2" r="2" fill="#4dd0b0"/><circle cx="837.78" cy="853.2" r="2" fill="#4dd0b0"/><circle cx="845.16" cy="853.2" r="2" fill="#4dd0b0"/><circle cx="852.54" cy="853.2" r="2" fill="#4dd0b0"/><circle cx="859.92" cy="853.2" r="2" fill="#4dd0b0"/><circle cx="867.31" cy="853.2" r="2" fill="#4dd0b0"/><circle cx="874.69" cy="853.2" r="2" fill="#4dd0b0"/><circle cx="882.07" cy="853.2" r="2" fill="#4dd0b0"/><circle cx="889.46" cy="853.2" r="2" fill="#4dd0b0"/><circle cx="896.84" cy="853.2" r="2" fill="#4dd0b0"/><circle cx="904.22" cy="853.2" r="2" fill="#4dd0b0"/><circle cx="911.61" cy="853.2" r="2" fill="#4dd0b0"/><circle cx="918.99" cy="853.2" r="2" fill="#4dd0b0"/><circle cx="926.37" cy="853.2" r="2" fill="#4dd0b0"/><circle cx="933.75" cy="853.2" r="2" fill="#4dd0b0"/><circle cx="941.14" cy="853.2" r="2" fill="#4dd0b0"/><circle cx="948.52" cy="853.2" r="2" fill="#4dd0b0"/><circle cx="955.90" cy="853.2" r="2" fill="#4dd0b0"/><circle cx="963.29" cy="853.2" r="2" fill="#4dd0b0"/><circle cx="970.67" cy="853.2" r="2" fill="#4dd0b0"/><circle cx="978.05" cy="853.2" r="2" fill="#4dd0b0"/><circle cx="985.44" cy="853.2" r="2" fill="#4dd0b0"/><circle cx="992.82" cy="853.2" r="2" fill="#4dd0b0"/><circle cx="1000.20" cy="853.2" r="2" fill="#4dd0b0"/><circle cx="1007.58" cy="853.2" r="2" fill="#4dd0b0"/><circle cx="1014.97" cy="853.2" r="2" fill="#4dd0b0"/><circle cx="1022.35" cy="853.2" r="2" fill="#4dd0b0"/><circle cx="1029.73" cy="853.2" r="2" fill="#4dd0b0"/><circle cx="1037.12" cy="853.2" r="2" fill="#4dd0b0"/><circle cx="1044.50" cy="853.2" r="2" fill="#4dd0b0"/><circle cx="1051.88" cy="853.2" r="2" fill="#4dd0b0"/><circle cx="1059.27" cy="853.2" r="2" fill="#4dd0b0"/><circle cx="1066.65" cy="853.2" r="2" fill="#4dd0b0"/><circle cx="1074.03" cy="853.2" r="2" fill="#4dd0b0"/><circle cx="1081.41" cy="853.2" r="2" fill="#4dd0b0"/><circle cx="1088.80" cy="853.2" r="2" fill="#4dd0b0"/><circle cx="1096.18" cy="853.2" r="2" fill="#4dd0b0"/><path d="M653.20 902.3H719.65" stroke="#f6d97a" stroke-width="1.6"/><circle cx="653.20" cy="902.3" r="2" fill="#f6d97a"/><circle cx="660.58" cy="902.3" r="2" fill="#f6d97a"/><circle cx="667.97" cy="902.3" r="2" fill="#f6d97a"/><circle cx="675.35" cy="902.3" r="2" fill="#f6d97a"/><circle cx="682.73" cy="902.3" r="2" fill="#f6d97a"/><circle cx="690.12" cy="902.3" r="2" fill="#f6d97a"/><circle cx="697.50" cy="902.3" r="2" fill="#f6d97a"/><circle cx="704.88" cy="902.3" r="2" fill="#f6d97a"/><circle cx="712.26" cy="902.3" r="2" fill="#f6d97a"/><circle cx="719.65" cy="902.3" r="2" fill="#f6d97a"/><path d="M771.33 902.3H1096.18" stroke="#f6d97a" stroke-width="1.6"/><circle cx="771.33" cy="902.3" r="2" fill="#f6d97a"/><circle cx="778.71" cy="902.3" r="2" fill="#f6d97a"/><circle cx="786.09" cy="902.3" r="2" fill="#f6d97a"/><circle cx="793.48" cy="902.3" r="2" fill="#f6d97a"/><circle cx="800.86" cy="902.3" r="2" fill="#f6d97a"/><circle cx="808.24" cy="902.3" r="2" fill="#f6d97a"/><circle cx="815.63" cy="902.3" r="2" fill="#f6d97a"/><circle cx="823.01" cy="902.3" r="2" fill="#f6d97a"/><circle cx="830.39" cy="902.3" r="2" fill="#f6d97a"/><circle cx="837.78" cy="902.3" r="2" fill="#f6d97a"/><circle cx="845.16" cy="902.3" r="2" fill="#f6d97a"/><circle cx="852.54" cy="902.3" r="2" fill="#f6d97a"/><circle cx="859.92" cy="902.3" r="2" fill="#f6d97a"/><circle cx="867.31" cy="902.3" r="2" fill="#f6d97a"/><circle cx="874.69" cy="902.3" r="2" fill="#f6d97a"/><circle cx="882.07" cy="902.3" r="2" fill="#f6d97a"/><circle cx="889.46" cy="902.3" r="2" fill="#f6d97a"/><circle cx="896.84" cy="902.3" r="2" fill="#f6d97a"/><circle cx="904.22" cy="902.3" r="2" fill="#f6d97a"/><circle cx="911.61" cy="902.3" r="2" fill="#f6d97a"/><circle cx="918.99" cy="902.3" r="2" fill="#f6d97a"/><circle cx="926.37" cy="902.3" r="2" fill="#f6d97a"/><circle cx="933.75" cy="902.3" r="2" fill="#f6d97a"/><circle cx="941.14" cy="902.3" r="2" fill="#f6d97a"/><circle cx="948.52" cy="902.3" r="2" fill="#f6d97a"/><circle cx="955.90" cy="902.3" r="2" fill="#f6d97a"/><circle cx="963.29" cy="902.3" r="2" fill="#f6d97a"/><circle cx="970.67" cy="902.3" r="2" fill="#f6d97a"/><circle cx="978.05" cy="902.3" r="2" fill="#f6d97a"/><circle cx="985.44" cy="902.3" r="2" fill="#f6d97a"/><circle cx="992.82" cy="902.3" r="2" fill="#f6d97a"/><circle cx="1000.20" cy="902.3" r="2" fill="#f6d97a"/><circle cx="1007.58" cy="902.3" r="2" fill="#f6d97a"/><circle cx="1014.97" cy="902.3" r="2" fill="#f6d97a"/><circle cx="1022.35" cy="902.3" r="2" fill="#f6d97a"/><circle cx="1029.73" cy="902.3" r="2" fill="#f6d97a"/><circle cx="1037.12" cy="902.3" r="2" fill="#f6d97a"/><circle cx="1044.50" cy="902.3" r="2" fill="#f6d97a"/><circle cx="1051.88" cy="902.3" r="2" fill="#f6d97a"/><circle cx="1059.27" cy="902.3" r="2" fill="#f6d97a"/><circle cx="1066.65" cy="902.3" r="2" fill="#f6d97a"/><circle cx="1074.03" cy="902.3" r="2" fill="#f6d97a"/><circle cx="1081.41" cy="902.3" r="2" fill="#f6d97a"/><circle cx="1088.80" cy="902.3" r="2" fill="#f6d97a"/><circle cx="1096.18" cy="902.3" r="2" fill="#f6d97a"/><rect x="1129" y="791" width="16" height="4" fill="#d9694a"/><circle cx="1137" cy="793" r="3.4" fill="#d9694a"/><rect x="1129" y="804" width="16" height="4" fill="#f8a565"/><circle cx="1137" cy="806" r="3.4" fill="#f8a565"/><rect x="1129" y="817" width="16" height="4" fill="#f6dc80"/><circle cx="1137" cy="819" r="3.4" fill="#f6dc80"/><rect x="1129" y="830" width="16" height="4" fill="#4dd0b0"/><circle cx="1137" cy="832" r="3.4" fill="#4dd0b0"/></svg>
<div class="t" style="left:583.5px;width:60px;text-align:right;top:792.60px;font-size:10px;line-height:14px;color:#50545c;font-weight:normal;">75 %</div>
<div class="t" style="left:583.5px;width:60px;text-align:right;top:827.00px;font-size:10px;line-height:14px;color:#50545c;font-weight:normal;">50 %</div>
<div class="t" style="left:583.5px;width:60px;text-align:right;top:861.40px;font-size:10px;line-height:14px;color:#50545c;font-weight:normal;">25 %</div>
<div class="t" style="left:583.5px;width:60px;text-align:right;top:895.80px;font-size:10px;line-height:14px;color:#50545c;font-weight:normal;">0 %</div>
<div class="t" style="left:622.5px;width:60px;text-align:center;top:908.50px;font-size:10px;line-height:14px;color:#50545c;font-weight:normal;">15:44:00</div>
<div class="t" style="left:685.8px;width:60px;text-align:center;top:908.50px;font-size:10px;line-height:14px;color:#50545c;font-weight:normal;">15:52:34</div>
<div class="t" style="left:749.1px;width:60px;text-align:center;top:908.50px;font-size:10px;line-height:14px;color:#50545c;font-weight:normal;">16:01:08</div>
<div class="t" style="left:812.4px;width:60px;text-align:center;top:908.50px;font-size:10px;line-height:14px;color:#50545c;font-weight:normal;">16:09:42</div>
<div class="t" style="left:875.7px;width:60px;text-align:center;top:908.50px;font-size:10px;line-height:14px;color:#50545c;font-weight:normal;">16:18:17</div>
<div class="t" style="left:939.0px;width:60px;text-align:center;top:908.50px;font-size:10px;line-height:14px;color:#50545c;font-weight:normal;">16:26:51</div>
<div class="t" style="left:1002.3px;width:60px;text-align:center;top:908.50px;font-size:10px;line-height:14px;color:#50545c;font-weight:normal;">16:35:25</div>
<div class="t" style="left:1065.6px;width:60px;text-align:center;top:908.50px;font-size:10px;line-height:14px;color:#50545c;font-weight:normal;">16:44:00</div>
<div class="t" style="left:1151px;top:787.00px;font-size:10px;line-height:14px;color:#4d5058;font-weight:normal;">70 pg 14.7 cluster</div>
<div class="t" style="left:1151px;top:800.00px;font-size:10px;line-height:14px;color:#4d5058;font-weight:normal;">70 pg 13.10</div>
<div class="t" style="left:1151px;top:813.00px;font-size:10px;line-height:14px;color:#4d5058;font-weight:normal;">60 pg cluster</div>
<div class="t" style="left:1151px;top:826.00px;font-size:10px;line-height:14px;color:#4d5058;font-weight:normal;">56 pg primary</div>
<div class="b" style="left:888px;top:920px;width:90px;height:19px;background:#e3e6e9;border-radius:7px 7px 0 0;"></div>
<svg width="1865" height="939"><path d="M896.5 934 l3 -3 l3 3" fill="none" stroke="#e8557a" stroke-width="1.3"/></svg>
<div class="t" style="left:909.5px;top:924.70px;font-size:10.6px;line-height:14.6px;color:#3f4147;font-weight:normal;">Session Tab</div>
<div class="t" style="left:1282px;top:60.50px;font-size:12px;line-height:16px;color:#1f2024;font-weight:bold;">Real Time Monitor</div>
<div class="b" style="left:1282px;top:91px;width:567px;height:154px;background:#f7f8fa;border:1px solid #c8ccd2;border-radius:2px;"></div>
<div class="t" style="left:1297.5px;top:104.80px;font-size:11.8px;line-height:15.8px;color:#1f2024;font-weight:bold;">Slow Query</div>
<div class="t" style="left:1365px;top:106.75px;font-size:9.5px;line-height:13.5px;color:#8a8d93;font-weight:normal;">Max Over Count : 0&nbsp;&nbsp;&nbsp;Max Elapsed Time(sec) : 0</div>
<div class="b" style="left:1731px;top:102px;width:71px;height:22px;background:#f7f8fa;border:1px solid #c3c8cf;border-radius:2px;"></div>
<div class="t" style="left:1738px;top:105.05px;font-size:11.5px;line-height:15.5px;color:#2a2b30;font-weight:normal;">ALL</div>
<svg width="1865" height="939"><path d="M1788.6 111.4h6l-3 4.2z" fill="#50545c"/></svg>
<svg width="1865" height="939"><circle cx="1823.5" cy="113" r="1.35" fill="#3a3d44"/><circle cx="1827" cy="113" r="1.35" fill="#3a3d44"/><circle cx="1830.5" cy="113" r="1.35" fill="#3a3d44"/></svg>
<svg width="1865" height="939"><rect x="1323" y="134.7" width="485" height="1" fill="#dfe1e5"/><rect x="1323" y="174.1" width="485" height="1" fill="#dfe1e5"/><rect x="1323" y="211.9" width="485" height="1" fill="#dfe1e5"/><circle cx="1324.1" cy="203.4" r="2.2" fill="#f8a863"/><circle cx="1324.6" cy="199.7" r="2.2" fill="#f8a863"/><circle cx="1328.5" cy="201.2" r="2.2" fill="#f8a863"/><circle cx="1329.0" cy="197.1" r="2.2" fill="#f8a863"/><circle cx="1332.4" cy="198.5" r="2.2" fill="#f8a863"/><circle cx="1332.9" cy="202.6" r="2.2" fill="#f8a863"/><circle cx="1340.4" cy="200.4" r="2.2" fill="#f8a863"/><circle cx="1347.9" cy="200.8" r="2.2" fill="#f8a863"/><circle cx="1355.4" cy="201.3" r="2.2" fill="#f8a863"/><circle cx="1359.5" cy="208.5" r="2.2" fill="#f8a863"/><circle cx="1360.0" cy="205.2" r="2.2" fill="#f8a863"/><circle cx="1363.9" cy="206.9" r="2.2" fill="#f8a863"/><circle cx="1364.4" cy="202.8" r="2.2" fill="#f8a863"/><circle cx="1368.3" cy="204.4" r="2.2" fill="#f8a863"/><circle cx="1368.8" cy="201.4" r="2.2" fill="#f8a863"/><circle cx="1372.7" cy="202.4" r="2.2" fill="#f8a863"/><circle cx="1373.2" cy="198.1" r="2.2" fill="#f8a863"/><circle cx="1377.1" cy="201.1" r="2.2" fill="#f8a863"/><circle cx="1377.6" cy="197.3" r="2.2" fill="#f8a863"/><circle cx="1381.0" cy="198.5" r="2.2" fill="#f8a863"/><circle cx="1381.5" cy="202.6" r="2.2" fill="#f8a863"/><circle cx="1389.0" cy="200.4" r="2.2" fill="#f8a863"/><circle cx="1396.5" cy="200.8" r="2.2" fill="#f8a863"/><circle cx="1404.0" cy="201.3" r="2.2" fill="#f8a863"/><circle cx="1408.1" cy="208.5" r="2.2" fill="#f8a863"/><circle cx="1408.6" cy="205.5" r="2.2" fill="#f8a863"/><circle cx="1412.5" cy="206.3" r="2.2" fill="#f8a863"/><circle cx="1413.0" cy="203.3" r="2.2" fill="#f8a863"/><circle cx="1416.9" cy="205.1" r="2.2" fill="#f8a863"/><circle cx="1417.4" cy="201.8" r="2.2" fill="#f8a863"/><circle cx="1421.3" cy="203.6" r="2.2" fill="#f8a863"/><circle cx="1421.8" cy="200.0" r="2.2" fill="#f8a863"/><circle cx="1425.7" cy="201.4" r="2.2" fill="#f8a863"/><circle cx="1426.2" cy="197.3" r="2.2" fill="#f8a863"/><circle cx="1429.6" cy="198.5" r="2.2" fill="#f8a863"/><circle cx="1430.1" cy="202.6" r="2.2" fill="#f8a863"/><circle cx="1437.6" cy="200.4" r="2.2" fill="#f8a863"/><circle cx="1445.1" cy="200.8" r="2.2" fill="#f8a863"/><circle cx="1452.6" cy="201.3" r="2.2" fill="#f8a863"/><circle cx="1456.7" cy="208.0" r="2.2" fill="#f8a863"/><circle cx="1457.2" cy="204.1" r="2.2" fill="#f8a863"/><circle cx="1461.1" cy="206.4" r="2.2" fill="#f8a863"/><circle cx="1461.6" cy="202.5" r="2.2" fill="#f8a863"/><circle cx="1465.5" cy="204.7" r="2.2" fill="#f8a863"/><circle cx="1466.0" cy="201.4" r="2.2" fill="#f8a863"/><circle cx="1469.9" cy="202.4" r="2.2" fill="#f8a863"/><circle cx="1470.4" cy="198.0" r="2.2" fill="#f8a863"/><circle cx="1474.3" cy="200.9" r="2.2" fill="#f8a863"/><circle cx="1474.8" cy="196.9" r="2.2" fill="#f8a863"/><circle cx="1478.2" cy="198.5" r="2.2" fill="#f8a863"/><circle cx="1478.7" cy="202.6" r="2.2" fill="#f8a863"/><circle cx="1486.2" cy="200.4" r="2.2" fill="#f8a863"/><circle cx="1493.7" cy="200.8" r="2.2" fill="#f8a863"/><circle cx="1501.2" cy="201.3" r="2.2" fill="#f8a863"/><circle cx="1505.3" cy="208.3" r="2.2" fill="#f8a863"/><circle cx="1505.8" cy="205.0" r="2.2" fill="#f8a863"/><circle cx="1509.7" cy="206.6" r="2.2" fill="#f8a863"/><circle cx="1510.2" cy="203.6" r="2.2" fill="#f8a863"/><circle cx="1514.1" cy="204.3" r="2.2" fill="#f8a863"/><circle cx="1514.6" cy="200.8" r="2.2" fill="#f8a863"/><circle cx="1518.5" cy="202.6" r="2.2" fill="#f8a863"/><circle cx="1519.0" cy="199.1" r="2.2" fill="#f8a863"/><circle cx="1522.9" cy="200.7" r="2.2" fill="#f8a863"/><circle cx="1523.4" cy="196.6" r="2.2" fill="#f8a863"/><circle cx="1526.8" cy="198.5" r="2.2" fill="#f8a863"/><circle cx="1527.3" cy="202.6" r="2.2" fill="#f8a863"/><circle cx="1534.8" cy="200.4" r="2.2" fill="#f8a863"/><circle cx="1542.3" cy="200.8" r="2.2" fill="#f8a863"/><circle cx="1549.8" cy="201.3" r="2.2" fill="#f8a863"/><circle cx="1553.9" cy="208.7" r="2.2" fill="#f8a863"/><circle cx="1554.4" cy="205.4" r="2.2" fill="#f8a863"/><circle cx="1558.3" cy="205.8" r="2.2" fill="#f8a863"/><circle cx="1558.8" cy="202.2" r="2.2" fill="#f8a863"/><circle cx="1562.7" cy="204.1" r="2.2" fill="#f8a863"/><circle cx="1563.2" cy="200.5" r="2.2" fill="#f8a863"/><circle cx="1567.1" cy="203.6" r="2.2" fill="#f8a863"/><circle cx="1567.6" cy="199.7" r="2.2" fill="#f8a863"/><circle cx="1571.5" cy="201.0" r="2.2" fill="#f8a863"/><circle cx="1572.0" cy="197.6" r="2.2" fill="#f8a863"/><circle cx="1575.4" cy="198.5" r="2.2" fill="#f8a863"/><circle cx="1575.9" cy="202.6" r="2.2" fill="#f8a863"/><circle cx="1583.4" cy="200.4" r="2.2" fill="#f8a863"/><circle cx="1590.9" cy="200.8" r="2.2" fill="#f8a863"/><circle cx="1598.4" cy="201.3" r="2.2" fill="#f8a863"/><circle cx="1602.5" cy="208.6" r="2.2" fill="#f8a863"/><circle cx="1603.0" cy="205.1" r="2.2" fill="#f8a863"/><circle cx="1606.9" cy="205.8" r="2.2" fill="#f8a863"/><circle cx="1607.4" cy="201.7" r="2.2" fill="#f8a863"/><circle cx="1611.3" cy="205.2" r="2.2" fill="#f8a863"/><circle cx="1611.8" cy="201.9" r="2.2" fill="#f8a863"/><circle cx="1615.7" cy="203.5" r="2.2" fill="#f8a863"/><circle cx="1616.2" cy="200.5" r="2.2" fill="#f8a863"/><circle cx="1620.1" cy="201.0" r="2.2" fill="#f8a863"/><circle cx="1620.6" cy="197.7" r="2.2" fill="#f8a863"/><circle cx="1624.0" cy="198.5" r="2.2" fill="#f8a863"/><circle cx="1624.5" cy="202.6" r="2.2" fill="#f8a863"/><circle cx="1632.0" cy="200.4" r="2.2" fill="#f8a863"/><circle cx="1639.5" cy="200.8" r="2.2" fill="#f8a863"/><circle cx="1647.0" cy="201.3" r="2.2" fill="#f8a863"/><circle cx="1651.1" cy="207.9" r="2.2" fill="#f8a863"/><circle cx="1651.6" cy="204.4" r="2.2" fill="#f8a863"/><circle cx="1655.5" cy="206.8" r="2.2" fill="#f8a863"/><circle cx="1656.0" cy="202.8" r="2.2" fill="#f8a863"/><circle cx="1659.9" cy="205.2" r="2.2" fill="#f8a863"/><circle cx="1660.4" cy="201.3" r="2.2" fill="#f8a863"/><circle cx="1664.3" cy="203.5" r="2.2" fill="#f8a863"/><circle cx="1664.8" cy="199.9" r="2.2" fill="#f8a863"/><circle cx="1668.7" cy="201.7" r="2.2" fill="#f8a863"/><circle cx="1669.2" cy="198.4" r="2.2" fill="#f8a863"/><circle cx="1672.6" cy="198.5" r="2.2" fill="#f8a863"/><circle cx="1673.1" cy="202.6" r="2.2" fill="#f8a863"/><circle cx="1680.6" cy="200.4" r="2.2" fill="#f8a863"/><circle cx="1688.1" cy="200.8" r="2.2" fill="#f8a863"/><circle cx="1695.6" cy="201.3" r="2.2" fill="#f8a863"/><circle cx="1699.7" cy="207.4" r="2.2" fill="#f8a863"/><circle cx="1700.2" cy="203.3" r="2.2" fill="#f8a863"/><circle cx="1704.1" cy="206.6" r="2.2" fill="#f8a863"/><circle cx="1704.6" cy="202.4" r="2.2" fill="#f8a863"/><circle cx="1708.5" cy="205.1" r="2.2" fill="#f8a863"/><circle cx="1709.0" cy="201.5" r="2.2" fill="#f8a863"/><circle cx="1712.9" cy="202.6" r="2.2" fill="#f8a863"/><circle cx="1713.4" cy="198.7" r="2.2" fill="#f8a863"/><circle cx="1717.3" cy="201.8" r="2.2" fill="#f8a863"/><circle cx="1717.8" cy="197.5" r="2.2" fill="#f8a863"/><circle cx="1721.2" cy="198.5" r="2.2" fill="#f8a863"/><circle cx="1721.7" cy="202.6" r="2.2" fill="#f8a863"/><circle cx="1729.2" cy="200.4" r="2.2" fill="#f8a863"/><circle cx="1736.7" cy="200.8" r="2.2" fill="#f8a863"/><circle cx="1744.2" cy="201.3" r="2.2" fill="#f8a863"/><circle cx="1748.3" cy="208.4" r="2.2" fill="#f8a863"/><circle cx="1748.8" cy="205.1" r="2.2" fill="#f8a863"/><circle cx="1752.7" cy="206.0" r="2.2" fill="#f8a863"/><circle cx="1753.2" cy="202.6" r="2.2" fill="#f8a863"/><circle cx="1757.1" cy="204.9" r="2.2" fill="#f8a863"/><circle cx="1757.6" cy="201.9" r="2.2" fill="#f8a863"/><circle cx="1761.5" cy="203.5" r="2.2" fill="#f8a863"/><circle cx="1762.0" cy="199.8" r="2.2" fill="#f8a863"/><circle cx="1765.9" cy="201.7" r="2.2" fill="#f8a863"/><circle cx="1766.4" cy="197.9" r="2.2" fill="#f8a863"/><circle cx="1769.8" cy="198.5" r="2.2" fill="#f8a863"/><circle cx="1770.3" cy="202.6" r="2.2" fill="#f8a863"/><circle cx="1777.8" cy="200.4" r="2.2" fill="#f8a863"/><circle cx="1785.3" cy="200.8" r="2.2" fill="#f8a863"/><circle cx="1792.8" cy="201.3" r="2.2" fill="#f8a863"/><circle cx="1796.9" cy="208.2" r="2.2" fill="#f8a863"/><circle cx="1797.4" cy="204.6" r="2.2" fill="#f8a863"/><circle cx="1801.3" cy="205.8" r="2.2" fill="#f8a863"/><circle cx="1801.8" cy="202.1" r="2.2" fill="#f8a863"/></svg>
<div class="t" style="left:1274px;width:40px;text-align:right;top:128.20px;font-size:10px;line-height:14px;color:#50545c;font-weight:normal;">60</div>
<div class="t" style="left:1274px;width:40px;text-align:right;top:167.60px;font-size:10px;line-height:14px;color:#50545c;font-weight:normal;">30</div>
<div class="t" style="left:1274px;width:40px;text-align:right;top:205.40px;font-size:10px;line-height:14px;color:#50545c;font-weight:normal;">0</div>
<div class="t" style="left:1293.5px;width:60px;text-align:center;top:217.80px;font-size:10px;line-height:14px;color:#50545c;font-weight:normal;">16:34:25</div>
<div class="t" style="left:1347.35px;width:60px;text-align:center;top:217.80px;font-size:10px;line-height:14px;color:#50545c;font-weight:normal;">16:35:31</div>
<div class="t" style="left:1401.2px;width:60px;text-align:center;top:217.80px;font-size:10px;line-height:14px;color:#50545c;font-weight:normal;">16:36:38</div>
<div class="t" style="left:1455.05px;width:60px;text-align:center;top:217.80px;font-size:10px;line-height:14px;color:#50545c;font-weight:normal;">16:37:45</div>
<div class="t" style="left:1508.9px;width:60px;text-align:center;top:217.80px;font-size:10px;line-height:14px;color:#50545c;font-weight:normal;">16:38:51</div>
<div class="t" style="left:1562.75px;width:60px;text-align:center;top:217.80px;font-size:10px;line-height:14px;color:#50545c;font-weight:normal;">16:39:58</div>
<div class="t" style="left:1616.6px;width:60px;text-align:center;top:217.80px;font-size:10px;line-height:14px;color:#50545c;font-weight:normal;">16:41:05</div>
<div class="t" style="left:1670.45px;width:60px;text-align:center;top:217.80px;font-size:10px;line-height:14px;color:#50545c;font-weight:normal;">16:42:11</div>
<div class="t" style="left:1724.3px;width:60px;text-align:center;top:217.80px;font-size:10px;line-height:14px;color:#50545c;font-weight:normal;">16:43:18</div>
<div class="t" style="left:1778.15px;width:60px;text-align:center;top:217.80px;font-size:10px;line-height:14px;color:#50545c;font-weight:normal;">16:44:25</div>
<div class="b" style="left:1282px;top:259px;width:567px;height:154px;background:#f7f8fa;border:1px solid #c8ccd2;border-radius:2px;"></div>
<div class="t" style="left:1297.5px;top:273.60px;font-size:11.8px;line-height:15.8px;color:#1f2024;font-weight:bold;">Blks Hit (count)</div>
<svg width="1865" height="939"><circle cx="1823.5" cy="281" r="1.35" fill="#3a3d44"/><circle cx="1827" cy="281" r="1.35" fill="#3a3d44"/><circle cx="1830.5" cy="281" r="1.35" fill="#3a3d44"/></svg>
<svg width="1865" height="939"><rect x="1342" y="303.80" width="466.5" height="1" fill="#dfe1e5"/><rect x="1342" y="342.80" width="466.5" height="1" fill="#dfe1e5"/><rect x="1342" y="379.80" width="466.5" height="1" fill="#dfe1e5"/><path d="M1342.0 319.6L1345.9 377.5L1349.8 315.7L1353.7 377.2L1357.7 326.8L1361.6 377.2L1365.5 319.2L1369.4 374.8L1373.3 321.5L1377.2 378.2L1381.2 320.2L1385.1 379.0L1389.0 323.8L1392.9 366.8L1396.8 325.2L1400.7 374.5L1404.7 319.6L1408.6 379.5L1412.5 316.5L1416.4 379.0L1420.3 315.2L1424.2 372.7L1428.2 315.4L1432.1 377.8L1436.0 324.7L1439.9 367.8L1443.8 315.4L1447.7 372.6L1451.6 322.8L1455.6 379.1L1459.5 326.4L1463.4 378.0L1467.3 327.2L1471.2 378.7L1475.1 323.4L1479.1 370.3L1483.0 323.3L1486.9 377.8L1490.8 326.5L1494.7 375.9L1498.6 318.0L1502.6 376.0L1506.5 317.5L1510.4 378.1L1514.3 327.1L1518.2 379.0L1522.1 315.5L1526.1 377.6L1530.0 315.8L1533.9 372.0L1537.8 322.9L1541.7 377.6L1545.6 324.5L1549.5 325.8L1553.5 316.7L1557.4 377.2L1561.3 326.1L1565.2 378.0L1569.1 316.0L1573.0 377.2L1577.0 320.5L1580.9 378.7L1584.8 325.0L1588.7 379.1L1592.6 318.8L1596.5 374.2L1600.5 326.6L1604.4 369.7L1608.3 322.2L1612.2 378.0L1616.1 317.1L1620.0 321.8L1623.9 368.0L1627.9 319.0L1631.8 321.2L1635.7 374.6L1639.6 318.2L1643.5 368.5L1647.4 317.5L1651.4 378.4L1655.3 325.4L1659.2 372.6L1663.1 321.6L1667.0 365.8L1670.9 315.2L1674.9 378.3L1678.8 318.3L1682.7 378.8L1686.6 322.3L1690.5 378.6L1694.4 315.1L1698.4 368.5L1702.3 321.1L1706.2 379.3L1710.1 323.9L1714.0 365.6L1717.9 322.8L1721.8 366.7L1725.8 318.7L1729.7 377.6L1733.6 322.7L1737.5 378.8L1741.4 321.2L1745.3 367.7L1749.3 323.6L1753.2 368.3L1757.1 320.1L1761.0 378.1L1764.9 324.1L1768.8 378.3L1772.8 317.2L1776.7 377.5L1780.6 322.9L1784.5 377.7L1788.4 317.1L1792.3 377.4L1796.3 316.5L1800.2 377.1L1804.1 315.5L1808.0 378.2" fill="none" stroke="#f6d97a" stroke-width="2" stroke-linejoin="round"/><path d="M1342.0 379.7L1345.9 379.8L1349.8 380.3L1353.7 380.1L1357.7 379.9L1361.6 379.6L1365.5 379.6L1369.4 379.9L1373.3 380.3L1377.2 379.7L1381.2 380.0L1385.1 379.8L1389.0 379.7L1392.9 379.8L1396.8 379.9L1400.7 379.6L1404.7 380.0L1408.6 380.0L1412.5 379.6L1416.4 380.1L1420.3 380.1L1424.2 379.6L1428.2 380.2L1432.1 379.6L1436.0 379.7L1439.9 379.9L1443.8 380.1L1447.7 379.7L1451.6 379.6L1455.6 380.2L1459.5 379.9L1463.4 379.9L1467.3 379.9L1471.2 380.0L1475.1 380.2L1479.1 379.8L1483.0 379.6L1486.9 380.2L1490.8 380.1L1494.7 379.6L1498.6 379.7L1502.6 379.8L1506.5 380.3L1510.4 379.7L1514.3 379.5L1518.2 379.5L1522.1 379.7L1526.1 380.3L1530.0 379.6L1533.9 380.1L1537.8 379.8L1541.7 379.5L1545.6 379.7L1549.5 380.2L1553.5 380.1L1557.4 379.6L1561.3 380.2L1565.2 379.8L1569.1 380.0L1573.0 380.2L1577.0 379.8L1580.9 380.3L1584.8 380.2L1588.7 380.0L1592.6 380.2L1596.5 380.3L1600.5 379.8L1604.4 379.7L1608.3 379.6L1612.2 380.2L1616.1 379.9L1620.0 380.0L1623.9 379.8L1627.9 379.9L1631.8 379.5L1635.7 380.0L1639.6 380.3L1643.5 379.7L1647.4 380.2L1651.4 379.8L1655.3 379.9L1659.2 379.6L1663.1 379.8L1667.0 379.8L1670.9 380.1L1674.9 379.8L1678.8 380.1L1682.7 379.7L1686.6 379.9L1690.5 380.2L1694.4 380.1L1698.4 380.0L1702.3 379.7L1706.2 380.2L1710.1 379.7L1714.0 379.8L1717.9 380.2L1721.8 379.8L1725.8 380.2L1729.7 380.2L1733.6 379.8L1737.5 380.1L1741.4 379.6L1745.3 379.9L1749.3 380.0L1753.2 379.6L1757.1 380.3L1761.0 379.7L1764.9 380.3L1768.8 380.2L1772.8 379.5L1776.7 379.7L1780.6 380.1L1784.5 380.2L1788.4 379.5L1792.3 379.8L1796.3 379.6L1800.2 380.2L1804.1 379.8L1808.0 380.0" fill="none" stroke="#f8a565" stroke-width="1.8" stroke-linejoin="round"/><path d="M1342.0 379.2L1345.9 378.1L1349.8 378.0L1353.7 378.7L1357.7 378.4L1361.6 378.3L1365.5 378.3L1369.4 379.2L1373.3 378.2L1377.2 378.5L1381.2 378.4L1385.1 378.8L1389.0 378.5L1392.9 378.2L1396.8 378.4L1400.7 378.3L1404.7 379.4L1408.6 379.2L1412.5 378.8L1416.4 378.4L1420.3 379.1L1424.2 378.4L1428.2 378.5L1432.1 379.4L1436.0 378.7L1439.9 379.1L1443.8 379.4L1447.7 379.3L1451.6 379.0L1455.6 379.2L1459.5 379.2L1463.4 379.4L1467.3 378.7L1471.2 378.9L1475.1 378.5L1479.1 378.5L1483.0 379.1L1486.9 378.0L1490.8 379.5L1494.7 378.8L1498.6 379.0L1502.6 378.8L1506.5 379.3L1510.4 378.1L1514.3 378.9L1518.2 379.4L1522.1 378.5L1526.1 379.3L1530.0 378.6L1533.9 378.9L1537.8 378.5L1541.7 377.9L1545.6 378.1L1549.5 378.8L1553.5 378.2L1557.4 378.4L1561.3 378.9L1565.2 379.3L1569.1 378.5L1573.0 378.6L1577.0 377.9L1580.9 377.9L1584.8 378.5L1588.7 378.9L1592.6 378.0L1596.5 379.5L1600.5 379.3L1604.4 378.6L1608.3 374.3L1612.2 379.3L1616.1 378.5L1620.0 378.0L1623.9 372.7L1627.9 378.8L1631.8 379.1L1635.7 379.0L1639.6 377.9L1643.5 378.9L1647.4 377.9L1651.4 378.0L1655.3 378.5L1659.2 379.1L1663.1 377.9L1667.0 378.7L1670.9 378.8L1674.9 379.0L1678.8 377.9L1682.7 378.7L1686.6 379.0L1690.5 378.7L1694.4 379.3L1698.4 378.5L1702.3 378.8L1706.2 379.0L1710.1 378.2L1714.0 378.1L1717.9 379.5L1721.8 378.6L1725.8 379.0L1729.7 378.0L1733.6 378.2L1737.5 379.1L1741.4 379.0L1745.3 379.2L1749.3 377.9L1753.2 379.0L1757.1 378.5L1761.0 378.7L1764.9 378.4L1768.8 378.5L1772.8 378.3L1776.7 379.3L1780.6 378.2L1784.5 379.0L1788.4 378.6L1792.3 378.9L1796.3 379.0L1800.2 378.6L1804.1 378.7L1808.0 378.9" fill="none" stroke="#d9694a" stroke-width="1.8" stroke-linejoin="round"/><path d="M1342.0 379.2L1345.9 379.1L1349.8 378.8L1353.7 379.1L1357.7 379.1L1361.6 379.3L1365.5 378.6L1369.4 378.8L1373.3 378.6L1377.2 379.0L1381.2 378.6L1385.1 378.9L1389.0 378.8L1392.9 378.9L1396.8 378.7L1400.7 379.1L1404.7 379.4L1408.6 379.4L1412.5 379.3L1416.4 379.4L1420.3 378.5L1424.2 379.0L1428.2 378.7L1432.1 379.5L1436.0 379.0L1439.9 378.5L1443.8 378.8L1447.7 379.0L1451.6 379.0L1455.6 379.4L1459.5 379.3L1463.4 379.3L1467.3 379.1L1471.2 379.1L1475.1 378.5L1479.1 379.3L1483.0 379.2L1486.9 379.2L1490.8 379.3L1494.7 379.2L1498.6 379.2L1502.6 379.0L1506.5 379.4L1510.4 378.5L1514.3 379.1L1518.2 378.5L1522.1 378.7L1526.1 378.7L1530.0 379.0L1533.9 378.5L1537.8 379.4L1541.7 378.8L1545.6 379.2L1549.5 378.7L1553.5 378.7L1557.4 379.3L1561.3 379.3L1565.2 379.5L1569.1 379.2L1573.0 379.4L1577.0 379.0L1580.9 378.4L1584.8 379.1L1588.7 379.1L1592.6 379.0L1596.5 379.2L1600.5 378.7L1604.4 378.7L1608.3 377.0L1612.2 379.2L1616.1 378.8L1620.0 378.5L1623.9 372.1L1627.9 379.0L1631.8 378.4L1635.7 379.5L1639.6 379.4L1643.5 378.6L1647.4 379.0L1651.4 379.4L1655.3 378.9L1659.2 378.4L1663.1 378.9L1667.0 379.1L1670.9 379.4L1674.9 379.4L1678.8 378.5L1682.7 378.9L1686.6 378.5L1690.5 379.4L1694.4 379.2L1698.4 379.4L1702.3 379.1L1706.2 379.4L1710.1 379.2L1714.0 379.0L1717.9 379.1L1721.8 379.4L1725.8 379.4L1729.7 378.4L1733.6 379.3L1737.5 378.9L1741.4 379.0L1745.3 378.9L1749.3 379.4L1753.2 379.1L1757.1 379.4L1761.0 378.9L1764.9 378.5L1768.8 378.8L1772.8 378.5L1776.7 379.2L1780.6 379.5L1784.5 378.9L1788.4 379.0L1792.3 378.9L1796.3 379.1L1800.2 378.8L1804.1 378.7L1808.0 378.5" fill="none" stroke="#4dd0b0" stroke-width="2.2" stroke-linejoin="round"/></svg>
<div class="t" style="left:1273px;width:60px;text-align:right;top:297.30px;font-size:10px;line-height:14px;color:#50545c;font-weight:normal;">279.1K</div>
<div class="t" style="left:1273px;width:60px;text-align:right;top:336.30px;font-size:10px;line-height:14px;color:#50545c;font-weight:normal;">139.6K</div>
<div class="t" style="left:1273px;width:60px;text-align:right;top:373.30px;font-size:10px;line-height:14px;color:#50545c;font-weight:normal;">0</div>
<div class="t" style="left:1312.0px;width:60px;text-align:center;top:385.80px;font-size:10px;line-height:14px;color:#50545c;font-weight:normal;">16:34:30</div>
<div class="t" style="left:1363.7777777777778px;width:60px;text-align:center;top:385.80px;font-size:10px;line-height:14px;color:#50545c;font-weight:normal;">16:35:35</div>
<div class="t" style="left:1415.5555555555557px;width:60px;text-align:center;top:385.80px;font-size:10px;line-height:14px;color:#50545c;font-weight:normal;">16:36:41</div>
<div class="t" style="left:1467.3333333333333px;width:60px;text-align:center;top:385.80px;font-size:10px;line-height:14px;color:#50545c;font-weight:normal;">16:37:46</div>
<div class="t" style="left:1519.111111111111px;width:60px;text-align:center;top:385.80px;font-size:10px;line-height:14px;color:#50545c;font-weight:normal;">16:38:52</div>
<div class="t" style="left:1570.888888888889px;width:60px;text-align:center;top:385.80px;font-size:10px;line-height:14px;color:#50545c;font-weight:normal;">16:39:57</div>
<div class="t" style="left:1622.6666666666667px;width:60px;text-align:center;top:385.80px;font-size:10px;line-height:14px;color:#50545c;font-weight:normal;">16:41:03</div>
<div class="t" style="left:1674.4444444444443px;width:60px;text-align:center;top:385.80px;font-size:10px;line-height:14px;color:#50545c;font-weight:normal;">16:42:08</div>
<div class="t" style="left:1726.2222222222222px;width:60px;text-align:center;top:385.80px;font-size:10px;line-height:14px;color:#50545c;font-weight:normal;">16:43:14</div>
<div class="t" style="left:1778.0px;width:60px;text-align:center;top:385.80px;font-size:10px;line-height:14px;color:#50545c;font-weight:normal;">16:44:20</div>
<div class="b" style="left:1282px;top:428px;width:567px;height:154px;background:#f7f8fa;border:1px solid #c8ccd2;border-radius:2px;"></div>
<div class="t" style="left:1297.5px;top:442.60px;font-size:11.8px;line-height:15.8px;color:#1f2024;font-weight:bold;">Blks Read (blocks)</div>
<svg width="1865" height="939"><circle cx="1823.5" cy="450" r="1.35" fill="#3a3d44"/><circle cx="1827" cy="450" r="1.35" fill="#3a3d44"/><circle cx="1830.5" cy="450" r="1.35" fill="#3a3d44"/></svg>
<svg width="1865" height="939"><rect x="1342" y="472.80" width="466.5" height="1" fill="#dfe1e5"/><rect x="1342" y="511.80" width="466.5" height="1" fill="#dfe1e5"/><rect x="1342" y="548.80" width="466.5" height="1" fill="#dfe1e5"/><path d="M1342.0 482.9L1345.9 549.3L1349.8 482.3L1353.7 549.3L1357.5 480.7L1361.4 549.3L1365.3 483.3L1369.2 549.3L1373.1 483.7L1377.0 549.3L1380.8 482.9L1384.7 549.3L1388.6 483.9L1392.5 549.3L1396.4 480.9L1400.2 549.3L1404.1 480.7L1408.0 549.3L1411.9 482.9L1415.8 549.3L1419.7 483.7L1423.5 549.3L1427.4 483.9L1431.3 549.3L1435.2 483.2L1439.1 549.3L1443.0 483.9L1446.8 549.3L1450.7 482.4L1454.6 549.3L1458.5 481.7L1462.4 549.3L1466.3 483.2L1470.2 549.3L1474.0 484.0L1477.9 549.3L1481.8 481.2L1485.7 549.3L1489.6 484.0L1493.5 549.3L1497.3 483.4L1501.2 549.3L1505.1 483.0L1509.0 549.3L1512.9 482.6L1516.8 549.3L1520.6 483.8L1524.5 549.3L1528.4 482.4L1532.3 549.3L1536.2 482.9L1540.0 549.3L1543.9 481.4L1547.8 481.4L1551.7 481.8L1555.6 549.3L1559.5 480.4L1563.3 549.3L1567.2 481.4L1571.1 549.3L1575.0 481.0L1578.9 549.3L1582.8 481.8L1586.7 549.3L1590.5 482.3L1594.4 549.3L1598.3 480.7L1602.2 549.3L1606.1 481.4L1610.0 549.3L1613.8 549.3L1617.7 548.6L1621.6 481.4L1625.5 549.3L1629.4 481.2L1633.2 549.3L1637.1 483.1L1641.0 549.3L1644.9 480.7L1648.8 549.3L1652.7 482.6L1656.5 549.3L1660.4 483.7L1664.3 549.3L1668.2 484.0L1672.1 549.3L1676.0 483.5L1679.8 549.3L1683.7 483.1L1687.6 549.3L1691.5 481.3L1695.4 549.3L1699.3 483.0L1703.2 549.3L1707.0 484.0L1710.9 549.3L1714.8 480.9L1718.7 549.3L1722.6 481.8L1726.5 549.3L1730.3 484.1L1734.2 549.3L1738.1 484.0L1742.0 549.3L1745.9 483.7L1749.8 549.3L1753.6 482.7L1757.5 549.3L1761.4 480.5L1765.3 549.3L1769.2 480.1L1773.0 549.3L1776.9 481.6L1780.8 549.3L1784.7 483.2L1788.6 549.3L1792.5 482.4L1796.3 549.3L1800.2 482.7L1804.1 549.3L1808.0 482.8" fill="none" stroke="#f6d97a" stroke-width="2" stroke-linejoin="round"/><path d="M1342.0 549.0L1345.9 549.0L1349.8 549.0L1353.7 549.0L1357.5 549.0L1361.4 549.0L1365.3 549.0L1369.2 549.0L1373.1 549.0L1377.0 549.0L1380.8 549.0L1384.7 549.0L1388.6 549.0L1392.5 549.0L1396.4 549.0L1400.2 549.0L1404.1 549.0L1408.0 549.0L1411.9 549.0L1415.8 549.0L1419.7 549.0L1423.5 549.0L1427.4 549.0L1431.3 549.0L1435.2 549.0L1439.1 549.0L1443.0 549.0L1446.8 549.0L1450.7 549.0L1454.6 549.0L1458.5 549.0L1462.4 549.0L1466.3 549.0L1470.2 549.0L1474.0 549.0L1477.9 549.0L1481.8 549.0L1485.7 549.0L1489.6 549.0L1493.5 549.0L1497.3 549.0L1501.2 549.0L1505.1 549.0L1509.0 549.0L1512.9 549.0L1516.8 549.0L1520.6 549.0L1524.5 549.0L1528.4 549.0L1532.3 549.0L1536.2 549.0L1540.0 549.0L1543.9 549.0L1547.8 549.0L1551.7 549.0L1555.6 549.0L1559.5 549.0L1563.3 549.0L1567.2 549.0L1571.1 549.0L1575.0 549.0L1578.9 549.0L1582.8 549.0L1586.7 549.0L1590.5 549.0L1594.4 549.0L1598.3 549.0L1602.2 549.0L1606.1 549.0L1610.0 549.0L1613.8 549.0L1617.7 549.0L1621.6 549.0L1625.5 549.0L1629.4 549.0L1633.2 549.0L1637.1 549.0L1641.0 549.0L1644.9 549.0L1648.8 549.0L1652.7 549.0L1656.5 549.0L1660.4 549.0L1664.3 549.0L1668.2 549.0L1672.1 549.0L1676.0 549.0L1679.8 549.0L1683.7 549.0L1687.6 549.0L1691.5 549.0L1695.4 549.0L1699.3 549.0L1703.2 549.0L1707.0 549.0L1710.9 549.0L1714.8 549.0L1718.7 549.0L1722.6 549.0L1726.5 549.0L1730.3 549.0L1734.2 549.0L1738.1 549.0L1742.0 549.0L1745.9 549.0L1749.8 549.0L1753.6 549.0L1757.5 549.0L1761.4 549.0L1765.3 549.0L1769.2 549.0L1773.0 549.0L1776.9 549.0L1780.8 549.0L1784.7 549.0L1788.6 549.0L1792.5 549.0L1796.3 549.0L1800.2 549.0L1804.1 549.0L1808.0 549.0" fill="none" stroke="#4dd0b0" stroke-width="2.4" stroke-linejoin="round"/></svg>
<div class="t" style="left:1273px;width:60px;text-align:right;top:466.30px;font-size:10px;line-height:14px;color:#50545c;font-weight:normal;">210.3K</div>
<div class="t" style="left:1273px;width:60px;text-align:right;top:505.30px;font-size:10px;line-height:14px;color:#50545c;font-weight:normal;">105.2K</div>
<div class="t" style="left:1273px;width:60px;text-align:right;top:542.30px;font-size:10px;line-height:14px;color:#50545c;font-weight:normal;">0</div>
<div class="t" style="left:1312.0px;width:60px;text-align:center;top:554.80px;font-size:10px;line-height:14px;color:#50545c;font-weight:normal;">16:34:30</div>
<div class="t" style="left:1363.7777777777778px;width:60px;text-align:center;top:554.80px;font-size:10px;line-height:14px;color:#50545c;font-weight:normal;">16:35:35</div>
<div class="t" style="left:1415.5555555555557px;width:60px;text-align:center;top:554.80px;font-size:10px;line-height:14px;color:#50545c;font-weight:normal;">16:36:41</div>
<div class="t" style="left:1467.3333333333333px;width:60px;text-align:center;top:554.80px;font-size:10px;line-height:14px;color:#50545c;font-weight:normal;">16:37:46</div>
<div class="t" style="left:1519.111111111111px;width:60px;text-align:center;top:554.80px;font-size:10px;line-height:14px;color:#50545c;font-weight:normal;">16:38:52</div>
<div class="t" style="left:1570.888888888889px;width:60px;text-align:center;top:554.80px;font-size:10px;line-height:14px;color:#50545c;font-weight:normal;">16:39:57</div>
<div class="t" style="left:1622.6666666666667px;width:60px;text-align:center;top:554.80px;font-size:10px;line-height:14px;color:#50545c;font-weight:normal;">16:41:03</div>
<div class="t" style="left:1674.4444444444443px;width:60px;text-align:center;top:554.80px;font-size:10px;line-height:14px;color:#50545c;font-weight:normal;">16:42:08</div>
<div class="t" style="left:1726.2222222222222px;width:60px;text-align:center;top:554.80px;font-size:10px;line-height:14px;color:#50545c;font-weight:normal;">16:43:14</div>
<div class="t" style="left:1778.0px;width:60px;text-align:center;top:554.80px;font-size:10px;line-height:14px;color:#50545c;font-weight:normal;">16:44:20</div>
<div class="b" style="left:1282px;top:597px;width:567px;height:154px;background:#f7f8fa;border:1px solid #c8ccd2;border-radius:2px;"></div>
<div class="t" style="left:1297.5px;top:611.60px;font-size:11.8px;line-height:15.8px;color:#1f2024;font-weight:bold;">TPS (count/sec)</div>
<svg width="1865" height="939"><circle cx="1823.5" cy="619" r="1.35" fill="#3a3d44"/><circle cx="1827" cy="619" r="1.35" fill="#3a3d44"/><circle cx="1830.5" cy="619" r="1.35" fill="#3a3d44"/></svg>
<svg width="1865" height="939"><rect x="1328" y="641.80" width="480.5" height="1" fill="#dfe1e5"/><rect x="1328" y="680.80" width="480.5" height="1" fill="#dfe1e5"/><rect x="1328" y="717.80" width="480.5" height="1" fill="#dfe1e5"/><path d="M1328.0 696.6L1332.0 694.8L1336.1 693.2L1340.1 686.1L1344.1 664.8L1348.2 703.9L1352.2 694.0L1356.2 689.7L1360.3 668.7L1364.3 687.0L1368.3 703.2L1372.4 688.8L1376.4 689.1L1380.4 690.8L1384.5 688.6L1388.5 688.2L1392.5 688.4L1396.6 685.7L1400.6 686.5L1404.6 653.1L1408.7 693.7L1412.7 696.0L1416.7 691.9L1420.8 705.6L1424.8 694.6L1428.8 691.2L1432.9 701.1L1436.9 677.4L1440.9 687.6L1445.0 678.7L1449.0 673.6L1453.0 692.5L1457.1 688.1L1461.1 686.3L1465.1 690.2L1469.2 701.3L1473.2 685.6L1477.2 668.0L1481.3 676.4L1485.3 693.6L1489.3 687.9L1493.4 667.9L1497.4 692.5L1501.4 692.0L1505.5 691.4L1509.5 692.4L1513.5 676.1L1517.6 691.9L1521.6 690.9L1525.6 692.6L1529.7 693.8L1533.7 688.0L1537.7 673.8L1541.8 686.3L1545.8 685.5L1549.8 688.4L1553.9 674.4L1557.9 674.5L1561.9 687.9L1566.0 704.0L1570.0 668.4L1574.1 670.7L1578.1 694.2L1582.1 691.5L1586.2 668.2L1590.2 690.9L1594.2 674.3L1598.3 651.4L1602.3 695.1L1606.3 689.2L1610.4 693.8L1614.4 667.9L1618.4 645.7L1622.5 692.1L1626.5 696.0L1630.5 673.4L1634.6 690.9L1638.6 695.4L1642.6 693.7L1646.7 686.3L1650.7 678.9L1654.7 690.2L1658.8 688.1L1662.8 695.6L1666.8 701.1L1670.9 696.2L1674.9 689.5L1678.9 673.3L1683.0 688.2L1687.0 689.2L1691.0 691.0L1695.1 696.7L1699.1 676.6L1703.1 689.4L1707.2 689.3L1711.2 688.4L1715.2 696.0L1719.3 695.5L1723.3 696.5L1727.3 688.6L1731.4 696.0L1735.4 696.7L1739.4 685.9L1743.5 672.8L1747.5 688.1L1751.5 689.3L1755.6 693.9L1759.6 695.7L1763.6 679.6L1767.7 677.4L1771.7 664.4L1775.7 691.9L1779.8 695.9L1783.8 688.5L1787.8 671.8L1791.9 696.3L1795.9 669.4L1799.9 686.2L1804.0 701.2L1808.0 691.6" fill="none" stroke="#f6d97a" stroke-width="2" stroke-linejoin="round"/><path d="M1328.0 701.6L1332.0 704.9L1336.1 704.7L1340.1 700.4L1344.1 708.4L1348.2 706.9L1352.2 706.5L1356.2 707.4L1360.3 686.6L1364.3 701.8L1368.3 692.1L1372.4 700.3L1376.4 701.9L1380.4 691.6L1384.5 700.8L1388.5 700.5L1392.5 706.9L1396.6 691.2L1400.6 703.4L1404.6 715.5L1408.7 688.4L1412.7 701.6L1416.7 701.0L1420.8 707.7L1424.8 703.2L1428.8 700.5L1432.9 701.5L1436.9 687.0L1440.9 700.8L1445.0 706.9L1449.0 704.0L1453.0 704.4L1457.1 690.2L1461.1 706.2L1465.1 705.8L1469.2 708.0L1473.2 705.4L1477.2 692.8L1481.3 700.4L1485.3 702.8L1489.3 703.6L1493.4 705.1L1497.4 702.2L1501.4 700.2L1505.5 693.7L1509.5 695.4L1513.5 700.8L1517.6 702.2L1521.6 694.4L1525.6 703.7L1529.7 690.2L1533.7 704.4L1537.7 692.2L1541.8 704.1L1545.8 707.2L1549.8 705.4L1553.9 704.5L1557.9 707.4L1561.9 706.4L1566.0 701.2L1570.0 695.1L1574.1 707.7L1578.1 687.9L1582.1 701.1L1586.2 706.5L1590.2 693.2L1594.2 708.0L1598.3 702.8L1602.3 677.5L1606.3 702.0L1610.4 701.1L1614.4 688.4L1618.4 687.1L1622.5 687.5L1626.5 707.1L1630.5 689.2L1634.6 700.6L1638.6 707.9L1642.6 700.4L1646.7 703.3L1650.7 700.7L1654.7 706.2L1658.8 707.5L1662.8 694.6L1666.8 707.8L1670.9 707.6L1674.9 701.2L1678.9 705.1L1683.0 708.6L1687.0 701.5L1691.0 703.4L1695.1 702.1L1699.1 700.4L1703.1 703.2L1707.2 702.3L1711.2 703.6L1715.2 695.0L1719.3 704.9L1723.3 702.1L1727.3 685.6L1731.4 707.8L1735.4 706.1L1739.4 702.8L1743.5 702.1L1747.5 700.9L1751.5 702.6L1755.6 689.6L1759.6 692.3L1763.6 704.0L1767.7 688.8L1771.7 700.8L1775.7 701.7L1779.8 706.8L1783.8 705.9L1787.8 708.0L1791.9 704.7L1795.9 706.6L1799.9 707.8L1804.0 685.8L1808.0 708.2" fill="none" stroke="#d9694a" stroke-width="1.9" stroke-linejoin="round"/><path d="M1328.0 708.1L1332.0 703.7L1336.1 705.9L1340.1 708.0L1344.1 705.7L1348.2 706.4L1352.2 703.4L1356.2 705.6L1360.3 706.6L1364.3 708.6L1368.3 706.3L1372.4 702.9L1376.4 705.0L1380.4 705.0L1384.5 704.2L1388.5 704.4L1392.5 703.1L1396.6 707.5L1400.6 708.0L1404.6 707.3L1408.7 703.9L1412.7 704.1L1416.7 706.9L1420.8 704.9L1424.8 704.1L1428.8 703.4L1432.9 708.0L1436.9 704.1L1440.9 704.8L1445.0 705.8L1449.0 707.9L1453.0 702.8L1457.1 706.4L1461.1 704.3L1465.1 705.4L1469.2 708.1L1473.2 708.1L1477.2 705.8L1481.3 705.7L1485.3 708.3L1489.3 704.6L1493.4 703.5L1497.4 707.7L1501.4 706.0L1505.5 705.8L1509.5 703.5L1513.5 708.5L1517.6 703.8L1521.6 704.6L1525.6 707.2L1529.7 704.3L1533.7 703.7L1537.7 705.9L1541.8 702.8L1545.8 708.2L1549.8 706.8L1553.9 707.4L1557.9 707.0L1561.9 704.8L1566.0 703.1L1570.0 703.5L1574.1 704.8L1578.1 708.1L1582.1 708.2L1586.2 708.6L1590.2 707.0L1594.2 704.8L1598.3 695.6L1602.3 703.0L1606.3 706.8L1610.4 704.7L1614.4 703.4L1618.4 691.1L1622.5 706.1L1626.5 703.7L1630.5 706.8L1634.6 708.0L1638.6 705.3L1642.6 707.4L1646.7 706.6L1650.7 705.9L1654.7 707.1L1658.8 704.3L1662.8 705.9L1666.8 707.1L1670.9 706.6L1674.9 706.9L1678.9 707.9L1683.0 706.7L1687.0 706.5L1691.0 707.7L1695.1 708.4L1699.1 707.2L1703.1 707.0L1707.2 705.9L1711.2 705.9L1715.2 708.6L1719.3 705.7L1723.3 703.4L1727.3 702.5L1731.4 708.1L1735.4 706.2L1739.4 706.1L1743.5 703.3L1747.5 706.1L1751.5 707.5L1755.6 703.4L1759.6 708.6L1763.6 703.5L1767.7 703.9L1771.7 705.3L1775.7 706.8L1779.8 704.9L1783.8 703.8L1787.8 702.9L1791.9 707.7L1795.9 708.1L1799.9 702.8L1804.0 706.6L1808.0 706.9" fill="none" stroke="#4dd0b0" stroke-width="2.1" stroke-linejoin="round"/><path d="M1328.0 714.8L1332.0 716.2L1336.1 714.0L1340.1 713.8L1344.1 713.6L1348.2 714.0L1352.2 713.7L1356.2 716.5L1360.3 714.3L1364.3 714.9L1368.3 715.0L1372.4 714.2L1376.4 714.3L1380.4 714.0L1384.5 716.4L1388.5 713.7L1392.5 715.8L1396.6 714.4L1400.6 714.3L1404.6 711.5L1408.7 715.8L1412.7 715.2L1416.7 714.5L1420.8 716.0L1424.8 716.4L1428.8 714.4L1432.9 715.9L1436.9 713.8L1440.9 713.3L1445.0 714.3L1449.0 714.6L1453.0 716.4L1457.1 714.1L1461.1 713.9L1465.1 716.4L1469.2 715.0L1473.2 715.4L1477.2 715.3L1481.3 716.3L1485.3 715.3L1489.3 714.4L1493.4 713.5L1497.4 713.9L1501.4 715.7L1505.5 716.3L1509.5 713.3L1513.5 716.0L1517.6 716.1L1521.6 715.3L1525.6 714.7L1529.7 716.6L1533.7 716.4L1537.7 714.4L1541.8 713.4L1545.8 715.1L1549.8 714.7L1553.9 715.1L1557.9 715.7L1561.9 715.3L1566.0 716.0L1570.0 714.9L1574.1 714.5L1578.1 716.4L1582.1 714.4L1586.2 714.0L1590.2 713.4L1594.2 714.4L1598.3 708.1L1602.3 714.7L1606.3 716.2L1610.4 714.4L1614.4 714.6L1618.4 704.1L1622.5 718.3L1626.5 713.5L1630.5 716.2L1634.6 714.0L1638.6 715.1L1642.6 714.8L1646.7 713.8L1650.7 713.5L1654.7 715.0L1658.8 714.1L1662.8 714.5L1666.8 715.4L1670.9 714.6L1674.9 715.5L1678.9 714.4L1683.0 713.7L1687.0 714.1L1691.0 714.9L1695.1 714.8L1699.1 713.8L1703.1 716.6L1707.2 715.6L1711.2 714.3L1715.2 714.0L1719.3 714.8L1723.3 714.5L1727.3 715.9L1731.4 715.8L1735.4 716.0L1739.4 715.1L1743.5 714.3L1747.5 714.4L1751.5 715.5L1755.6 715.4L1759.6 716.1L1763.6 715.5L1767.7 715.0L1771.7 716.0L1775.7 713.8L1779.8 716.3L1783.8 715.5L1787.8 714.4L1791.9 715.7L1795.9 715.6L1799.9 716.3L1804.0 714.3L1808.0 715.7" fill="none" stroke="#f8a565" stroke-width="1.8" stroke-linejoin="round"/></svg>
<div class="t" style="left:1259px;width:60px;text-align:right;top:635.30px;font-size:10px;line-height:14px;color:#50545c;font-weight:normal;">134</div>
<div class="t" style="left:1259px;width:60px;text-align:right;top:674.30px;font-size:10px;line-height:14px;color:#50545c;font-weight:normal;">67</div>
<div class="t" style="left:1259px;width:60px;text-align:right;top:711.30px;font-size:10px;line-height:14px;color:#50545c;font-weight:normal;">0</div>
<div class="t" style="left:1298.0px;width:60px;text-align:center;top:723.80px;font-size:10px;line-height:14px;color:#50545c;font-weight:normal;">16:34:30</div>
<div class="t" style="left:1351.3333333333333px;width:60px;text-align:center;top:723.80px;font-size:10px;line-height:14px;color:#50545c;font-weight:normal;">16:35:35</div>
<div class="t" style="left:1404.6666666666667px;width:60px;text-align:center;top:723.80px;font-size:10px;line-height:14px;color:#50545c;font-weight:normal;">16:36:41</div>
<div class="t" style="left:1458.0px;width:60px;text-align:center;top:723.80px;font-size:10px;line-height:14px;color:#50545c;font-weight:normal;">16:37:46</div>
<div class="t" style="left:1511.3333333333333px;width:60px;text-align:center;top:723.80px;font-size:10px;line-height:14px;color:#50545c;font-weight:normal;">16:38:52</div>
<div class="t" style="left:1564.6666666666667px;width:60px;text-align:center;top:723.80px;font-size:10px;line-height:14px;color:#50545c;font-weight:normal;">16:39:57</div>
<div class="t" style="left:1618.0px;width:60px;text-align:center;top:723.80px;font-size:10px;line-height:14px;color:#50545c;font-weight:normal;">16:41:03</div>
<div class="t" style="left:1671.3333333333333px;width:60px;text-align:center;top:723.80px;font-size:10px;line-height:14px;color:#50545c;font-weight:normal;">16:42:08</div>
<div class="t" style="left:1724.6666666666667px;width:60px;text-align:center;top:723.80px;font-size:10px;line-height:14px;color:#50545c;font-weight:normal;">16:43:14</div>
<div class="t" style="left:1778.0px;width:60px;text-align:center;top:723.80px;font-size:10px;line-height:14px;color:#50545c;font-weight:normal;">16:44:20</div>
<div class="b" style="left:1282px;top:766px;width:567px;height:154px;background:#f7f8fa;border:1px solid #c8ccd2;border-radius:2px;"></div>
<div class="t" style="left:1297.5px;top:780.60px;font-size:11.8px;line-height:15.8px;color:#1f2024;font-weight:bold;">Rows Hit Ratio (%)</div>
<svg width="1865" height="939"><circle cx="1823.5" cy="788" r="1.35" fill="#3a3d44"/><circle cx="1827" cy="788" r="1.35" fill="#3a3d44"/><circle cx="1830.5" cy="788" r="1.35" fill="#3a3d44"/></svg>
<svg width="1865" height="939"><rect x="1328" y="810.80" width="480.5" height="1" fill="#dfe1e5"/><rect x="1328" y="849.80" width="480.5" height="1" fill="#dfe1e5"/><rect x="1328" y="886.80" width="480.5" height="1" fill="#dfe1e5"/><path d="M1328.0 858.6L1332.0 870.2L1336.1 845.8L1340.1 819.4L1344.1 819.4L1348.2 819.4L1352.2 819.4L1356.2 819.4L1360.3 819.4L1364.3 819.4L1368.3 819.4L1372.4 819.4L1376.4 834.2L1380.4 863.2L1384.5 867.7L1388.5 819.4L1392.5 819.4L1396.6 819.4L1400.6 819.4L1404.6 819.4L1408.7 819.4L1412.7 819.4L1416.7 819.4L1420.8 819.4L1424.8 842.4L1428.8 864.0L1432.9 873.4L1436.9 857.4L1440.9 819.4L1445.0 819.4L1449.0 819.4L1453.0 819.4L1457.1 819.4L1461.1 819.4L1465.1 819.4L1469.2 819.4L1473.2 841.4L1477.2 863.7L1481.3 872.6L1485.3 853.9L1489.3 819.4L1493.4 819.4L1497.4 819.4L1501.4 819.4L1505.5 819.4L1509.5 819.4L1513.5 819.4L1517.6 819.4L1521.6 835.6L1525.6 862.3L1529.7 872.0L1533.7 844.3L1537.7 819.4L1541.8 819.4L1545.8 819.4L1549.8 819.4L1553.9 819.4L1557.9 819.4L1561.9 819.4L1566.0 819.4L1570.0 842.8L1574.1 860.2L1578.1 868.6L1582.1 851.6L1586.2 819.4L1590.2 819.4L1594.2 819.4L1598.3 819.4L1602.3 819.4L1606.3 819.4L1610.4 819.4L1614.4 819.4L1618.4 842.7L1622.5 864.2L1626.5 873.3L1630.5 843.4L1634.6 819.4L1638.6 819.4L1642.6 819.4L1646.7 819.4L1650.7 819.4L1654.7 819.4L1658.8 819.4L1662.8 819.4L1666.8 819.4L1670.9 840.7L1674.9 865.8L1678.9 866.2L1683.0 819.4L1687.0 819.4L1691.0 819.4L1695.1 819.4L1699.1 819.4L1703.1 819.4L1707.2 819.4L1711.2 819.4L1715.2 819.4L1719.3 835.9L1723.3 866.8L1727.3 865.1L1731.4 847.8L1735.4 819.4L1739.4 819.4L1743.5 819.4L1747.5 819.4L1751.5 819.4L1755.6 819.4L1759.6 819.4L1763.6 819.4L1767.7 840.5L1771.7 865.7L1775.7 871.2L1779.8 843.9L1783.8 819.4L1787.8 819.4L1791.9 819.4L1795.9 819.4L1799.9 819.4L1804.0 819.4L1808.0 819.4" fill="none" stroke="#d9694a" stroke-width="1.9" stroke-linejoin="round"/><path d="M1328.0 847.0L1332.0 839.8L1336.1 852.9L1340.1 847.6L1344.1 854.7L1348.2 851.9L1352.2 846.6L1356.2 851.3L1360.3 852.2L1364.3 861.7L1368.3 846.1L1372.4 848.8L1376.4 845.1L1380.4 853.8L1384.5 849.0L1388.5 853.6L1392.5 850.5L1396.6 848.4L1400.6 855.7L1404.6 847.3L1408.7 850.9L1412.7 849.0L1416.7 846.9L1420.8 849.3L1424.8 852.3L1428.8 843.4L1432.9 848.6L1436.9 854.3L1440.9 852.8L1445.0 843.6L1449.0 850.4L1453.0 847.1L1457.1 851.9L1461.1 843.8L1465.1 851.6L1469.2 848.8L1473.2 846.6L1477.2 848.9L1481.3 845.3L1485.3 845.6L1489.3 848.6L1493.4 850.7L1497.4 850.2L1501.4 847.2L1505.5 843.4L1509.5 846.1L1513.5 851.9L1517.6 847.2L1521.6 845.5L1525.6 848.7L1529.7 845.9L1533.7 849.0L1537.7 851.2L1541.8 842.6L1545.8 846.0L1549.8 862.8L1553.9 846.8L1557.9 845.1L1561.9 860.8L1566.0 847.2L1570.0 843.0L1574.1 838.6L1578.1 849.5L1582.1 834.8L1586.2 850.7L1590.2 848.2L1594.2 846.9L1598.3 842.3L1602.3 849.5L1606.3 846.7L1610.4 854.1L1614.4 855.2L1618.4 854.2L1622.5 843.4L1626.5 851.1L1630.5 857.7L1634.6 847.8L1638.6 850.1L1642.6 851.6L1646.7 854.7L1650.7 852.9L1654.7 845.3L1658.8 854.0L1662.8 851.1L1666.8 848.9L1670.9 848.3L1674.9 853.0L1678.9 853.4L1683.0 845.4L1687.0 844.1L1691.0 843.2L1695.1 843.8L1699.1 854.7L1703.1 842.7L1707.2 845.7L1711.2 865.4L1715.2 849.0L1719.3 836.0L1723.3 842.7L1727.3 851.0L1731.4 849.5L1735.4 849.2L1739.4 843.2L1743.5 851.0L1747.5 851.7L1751.5 853.5L1755.6 842.6L1759.6 848.3L1763.6 846.5L1767.7 850.2L1771.7 854.4L1775.7 849.8L1779.8 846.5L1783.8 851.9L1787.8 848.7L1791.9 844.3L1795.9 853.9L1799.9 843.9L1804.0 851.2L1808.0 854.2" fill="none" stroke="#f6d97a" stroke-width="1.9" stroke-linejoin="round"/><path d="M1328.0 867.0L1332.0 866.1L1336.1 871.3L1340.1 882.9L1344.1 875.8L1348.2 868.0L1352.2 872.6L1356.2 879.9L1360.3 879.5L1364.3 882.7L1368.3 874.0L1372.4 880.5L1376.4 875.4L1380.4 866.9L1384.5 866.8L1388.5 874.6L1392.5 869.0L1396.6 881.4L1400.6 865.9L1404.6 867.5L1408.7 874.7L1412.7 867.1L1416.7 878.3L1420.8 865.3L1424.8 877.8L1428.8 866.3L1432.9 868.0L1436.9 866.2L1440.9 870.1L1445.0 882.5L1449.0 878.6L1453.0 871.4L1457.1 866.6L1461.1 871.0L1465.1 883.2L1469.2 877.3L1473.2 877.4L1477.2 880.7L1481.3 879.6L1485.3 874.1L1489.3 876.8L1493.4 878.8L1497.4 876.1L1501.4 865.9L1505.5 872.6L1509.5 869.6L1513.5 866.2L1517.6 883.3L1521.6 867.2L1525.6 882.1L1529.7 880.2L1533.7 869.9L1537.7 869.6L1541.8 872.2L1545.8 874.9L1549.8 870.2L1553.9 875.8L1557.9 880.2L1561.9 879.7L1566.0 881.8L1570.0 883.2L1574.1 865.8L1578.1 865.9L1582.1 877.3L1586.2 876.1L1590.2 878.6L1594.2 869.1L1598.3 874.6L1602.3 880.7L1606.3 867.1L1610.4 866.3L1614.4 883.0L1618.4 875.2L1622.5 879.7L1626.5 871.8L1630.5 877.1L1634.6 878.2L1638.6 878.2L1642.6 872.4L1646.7 874.3L1650.7 874.6L1654.7 871.0L1658.8 874.9L1662.8 865.9L1666.8 875.6L1670.9 868.9L1674.9 866.2L1678.9 872.1L1683.0 872.7L1687.0 868.9L1691.0 870.4L1695.1 880.2L1699.1 876.0L1703.1 880.9L1707.2 883.5L1711.2 870.8L1715.2 877.7L1719.3 879.1L1723.3 883.4L1727.3 883.5L1731.4 871.1L1735.4 877.1L1739.4 875.6L1743.5 871.1L1747.5 866.7L1751.5 870.6L1755.6 879.7L1759.6 865.1L1763.6 880.4L1767.7 872.9L1771.7 871.7L1775.7 878.4L1779.8 867.0L1783.8 872.3L1787.8 870.4L1791.9 881.3L1795.9 868.1L1799.9 878.4L1804.0 872.2L1808.0 869.9" fill="none" stroke="#f8a565" stroke-width="1.9" stroke-linejoin="round"/><path d="M1328.0 847.2L1332.0 861.7L1336.1 860.7L1340.1 840.5L1344.1 819.4L1348.2 819.4L1352.2 852.3L1356.2 844.3L1360.3 849.7L1364.3 849.2L1368.3 856.8L1372.4 848.8L1376.4 852.3L1380.4 844.6L1384.5 867.4L1388.5 840.5L1392.5 819.4L1396.6 819.4L1400.6 851.8L1404.6 859.1L1408.7 857.4L1412.7 840.7L1416.7 836.8L1420.8 858.4L1424.8 844.0L1428.8 843.2L1432.9 862.6L1436.9 864.7L1440.9 837.2L1445.0 819.4L1449.0 819.4L1453.0 853.3L1457.1 838.2L1461.1 838.5L1465.1 844.2L1469.2 838.3L1473.2 847.9L1477.2 844.0L1481.3 855.3L1485.3 857.0L1489.3 833.8L1493.4 819.4L1497.4 819.4L1501.4 850.4L1505.5 850.1L1509.5 838.1L1513.5 834.4L1517.6 856.8L1521.6 841.4L1525.6 853.0L1529.7 863.4L1533.7 863.5L1537.7 843.1L1541.8 819.4L1545.8 819.4L1549.8 852.6L1553.9 848.9L1557.9 844.3L1561.9 848.4L1566.0 852.8L1570.0 839.1L1574.1 853.9L1578.1 860.5L1582.1 855.1L1586.2 836.0L1590.2 819.4L1594.2 819.4L1598.3 854.7L1602.3 851.4L1606.3 844.4L1610.4 856.0L1614.4 836.1L1618.4 847.3L1622.5 846.6L1626.5 866.5L1630.5 857.0L1634.6 843.6L1638.6 819.4L1642.6 819.4L1646.7 853.7L1650.7 859.3L1654.7 857.0L1658.8 855.2L1662.8 834.8L1666.8 852.1L1670.9 858.5L1674.9 834.5L1678.9 854.7L1683.0 835.2L1687.0 819.4L1691.0 819.4L1695.1 851.5L1699.1 853.6L1703.1 855.8L1707.2 853.2L1711.2 858.5L1715.2 855.6L1719.3 847.5L1723.3 852.3L1727.3 855.9L1731.4 857.9L1735.4 834.2L1739.4 819.4L1743.5 819.4L1747.5 853.0L1751.5 850.3L1755.6 845.4L1759.6 852.9L1763.6 859.2L1767.7 848.4L1771.7 858.1L1775.7 864.1L1779.8 862.1L1783.8 835.2L1787.8 819.4L1791.9 819.4L1795.9 851.7L1799.9 844.9L1804.0 851.8L1808.0 850.0" fill="none" stroke="#4dd0b0" stroke-width="2.1" stroke-linejoin="round"/></svg>
<div class="t" style="left:1259px;width:60px;text-align:right;top:804.30px;font-size:10px;line-height:14px;color:#50545c;font-weight:normal;">112</div>
<div class="t" style="left:1259px;width:60px;text-align:right;top:843.30px;font-size:10px;line-height:14px;color:#50545c;font-weight:normal;">56</div>
<div class="t" style="left:1259px;width:60px;text-align:right;top:880.30px;font-size:10px;line-height:14px;color:#50545c;font-weight:normal;">0</div>
<div class="t" style="left:1298.0px;width:60px;text-align:center;top:892.80px;font-size:10px;line-height:14px;color:#50545c;font-weight:normal;">16:34:30</div>
<div class="t" style="left:1351.3333333333333px;width:60px;text-align:center;top:892.80px;font-size:10px;line-height:14px;color:#50545c;font-weight:normal;">16:35:35</div>
<div class="t" style="left:1404.6666666666667px;width:60px;text-align:center;top:892.80px;font-size:10px;line-height:14px;color:#50545c;font-weight:normal;">16:36:41</div>
<div class="t" style="left:1458.0px;width:60px;text-align:center;top:892.80px;font-size:10px;line-height:14px;color:#50545c;font-weight:normal;">16:37:46</div>
<div class="t" style="left:1511.3333333333333px;width:60px;text-align:center;top:892.80px;font-size:10px;line-height:14px;color:#50545c;font-weight:normal;">16:38:52</div>
<div class="t" style="left:1564.6666666666667px;width:60px;text-align:center;top:892.80px;font-size:10px;line-height:14px;color:#50545c;font-weight:normal;">16:39:57</div>
<div class="t" style="left:1618.0px;width:60px;text-align:center;top:892.80px;font-size:10px;line-height:14px;color:#50545c;font-weight:normal;">16:41:03</div>
<div class="t" style="left:1671.3333333333333px;width:60px;text-align:center;top:892.80px;font-size:10px;line-height:14px;color:#50545c;font-weight:normal;">16:42:08</div>
<div class="t" style="left:1724.6666666666667px;width:60px;text-align:center;top:892.80px;font-size:10px;line-height:14px;color:#50545c;font-weight:normal;">16:43:14</div>
<div class="t" style="left:1778.0px;width:60px;text-align:center;top:892.80px;font-size:10px;line-height:14px;color:#50545c;font-weight:normal;">16:44:20</div></body></html>
